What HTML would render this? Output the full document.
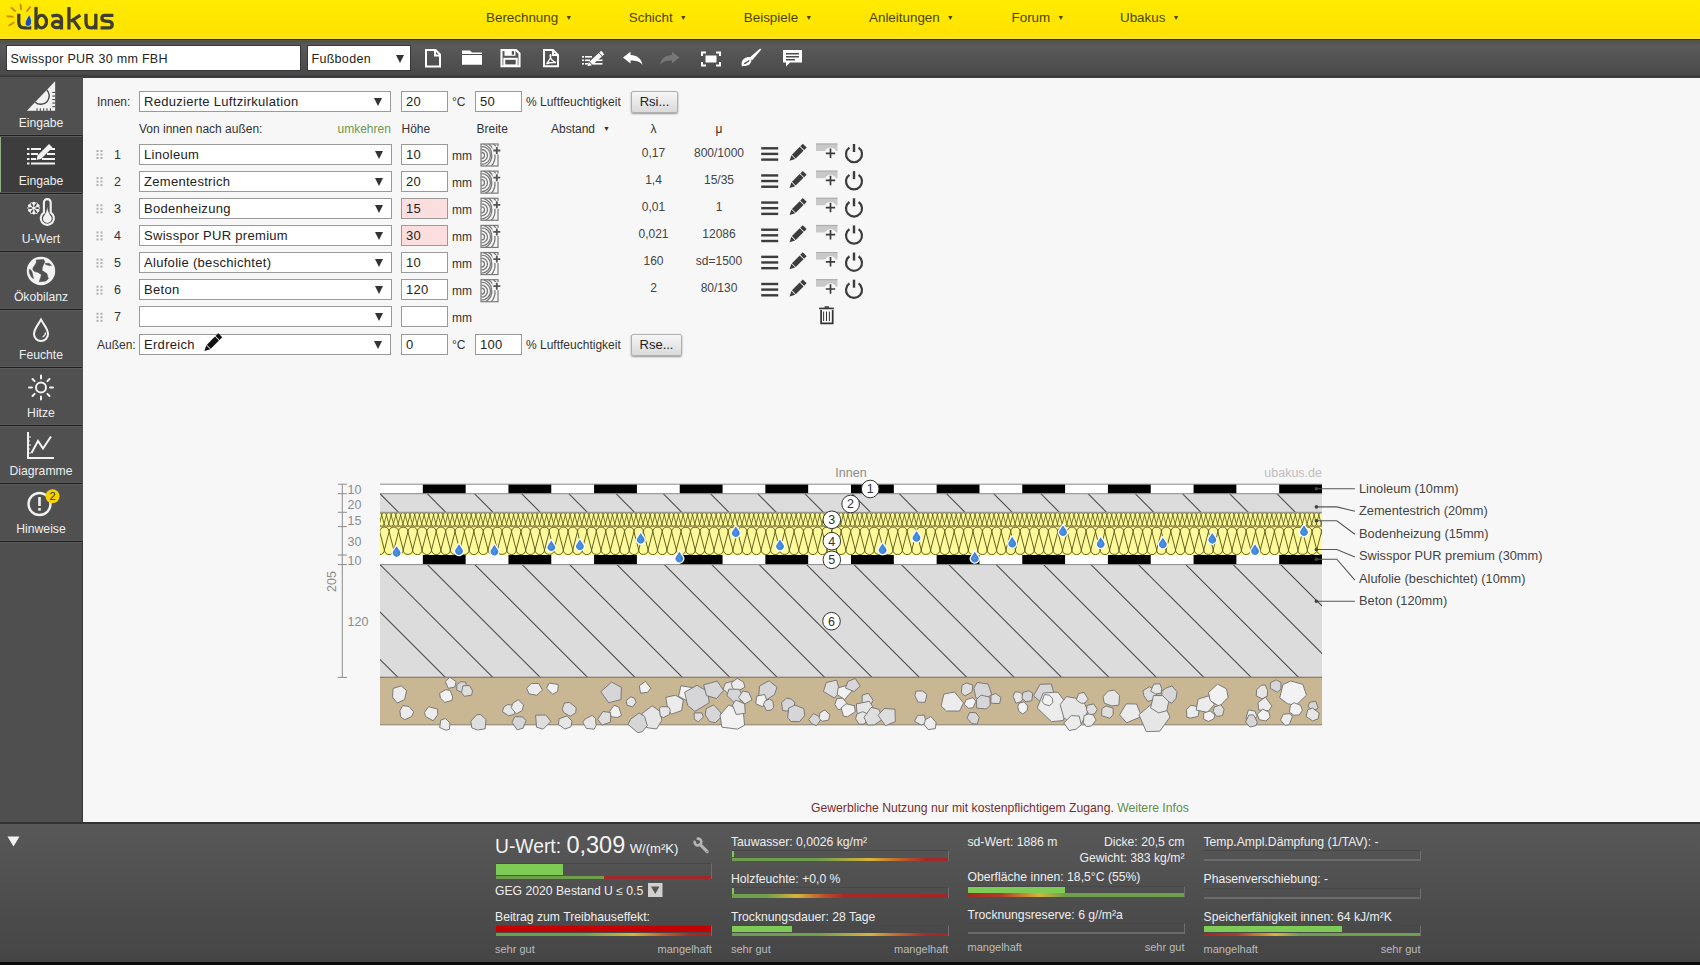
<!DOCTYPE html><html><head><meta charset="utf-8"><style>
*{box-sizing:border-box;margin:0;padding:0}
html,body{width:1700px;height:965px;overflow:hidden;background:#f7f7f7;font-family:"Liberation Sans",sans-serif;color:#333}
.a{position:absolute}
#hdr{left:0;top:0;width:1700px;height:40px;background:linear-gradient(#ffeb00 0%,#ffe300 90%,#f3e040 100%);border-bottom:1px solid #3a3300}
.nav{top:10px;font-size:13.4px;color:#4a4510;white-space:nowrap;line-height:15px}
.nav i{font-style:normal;font-size:7px;display:inline-block;margin-left:7px;vertical-align:2px}
#tb{left:0;top:40px;width:1700px;height:38px;background:linear-gradient(#55553f 0px,#525252 2px,#5a5a5a 5px,#4a4a4a 34px,#3c3c3c 36px,#3c3c3c 100%)}
#side{left:0;top:78px;width:83px;height:744px;background:#4f4f4f;border-right:1px solid #383838}
.tab{left:0;width:83px;height:58px;color:#eee;font-size:12.2px;text-align:center}
.tab .sep{position:absolute;z-index:2;left:0;bottom:-1px;width:82px;height:1.4px;background:#1e1e1e;box-shadow:0 -1px 0 #5a5a5a,0 1px 0 #5c5c5c}
.tab span{position:absolute;left:0;width:82px;top:36px;line-height:15px}
.tab svg{position:absolute;left:0;top:0}
#bot{left:0;top:822px;width:1700px;height:143px;background:linear-gradient(#585858,#454545);border-top:2px solid #333;border-bottom:3px solid #0a0a0a}
.lbl{font-size:12px;color:#333;white-space:nowrap;line-height:14px}
.sel{background:#fff;border:1px solid #9a9a9a;height:21px;font-size:13px;letter-spacing:.3px;color:#222;white-space:nowrap;overflow:hidden;padding-left:4px;line-height:19px}
.sel b{position:absolute;right:8px;top:6px;width:0;height:0;border-left:4.1px solid transparent;border-right:4.1px solid transparent;border-top:8px solid #333}
.inp{background:#fff;border:1px solid #9a9a9a;height:21px;width:47px;font-size:13px;letter-spacing:.3px;color:#222;padding-left:4px;line-height:19px}
.pink{background:#fcdede}
.btn{border:1px solid #b0b0b0;border-radius:2px;background:linear-gradient(#f6f6f6,#dadada);box-shadow:0 1px 2px rgba(0,0,0,.4);font-size:13px;color:#222;text-align:center;line-height:20px}
.num{font-size:12.5px;color:#333;line-height:14px}
.val{font-size:12px;color:#444;text-align:center;width:80px;line-height:14px}
.bt{font-size:12.2px;color:#eee;white-space:nowrap;line-height:14px}
.sm{font-size:11px;color:#bbb;white-space:nowrap;line-height:13px}
.bar{height:11px;border-right:1px solid #6e6e6e;border-top:1px solid #474747}
.bar .bl{position:absolute;left:0;bottom:0;width:100%;height:3px;background:#686868}
.bar .f{position:absolute;left:0;top:0;height:6px;background:#7ecb55}
.bar .s{position:absolute;left:0;top:6.5px;height:3.5px;width:100%}
.dl{font-size:12.8px;color:#444;white-space:nowrap;line-height:15px}
</style></head><body>
<div id="hdr" class="a"></div>
<svg class="a" style="left:0;top:0" width="130" height="38" viewBox="0 0 130 38">
<g stroke="#cf8a0c" stroke-width="1.9" stroke-linecap="round">
<line x1="7.4" y1="16.2" x2="12.6" y2="16.8"/>
<line x1="9.4" y1="25.2" x2="13.9" y2="22.5"/>
<line x1="11.5" y1="7.8" x2="15" y2="11"/>
<line x1="20.5" y1="4.4" x2="21.1" y2="9.1"/>
<line x1="30.2" y1="7.1" x2="26.9" y2="11"/>
</g>
<g fill="none" stroke="#403e2c" stroke-width="3.3">
<path d="M18.75 13.8 V22 C18.75 26 21 27.85 24.5 27.85 H31.3"/>
<path d="M36 6.9 V29.6"/>
<ellipse cx="41.6" cy="21.65" rx="4.9" ry="6.2"/>
<ellipse cx="56.9" cy="24.5" rx="4.5" ry="3.2"/>
<path d="M61.45 19 V29.5 M51.5 16.2 C53.5 15.4 55.5 15.35 57.2 15.4 C60.2 15.6 61.45 16.9 61.45 19.5"/>
<path d="M68.95 7.1 V29.6 M80.3 15.2 L70.8 21.4 M73.2 19.9 L79.9 29.5"/>
<path d="M86 13.7 V22 C86 26 88 27.95 90.9 27.95 C93.5 27.95 95.85 26.5 95.85 23 V13.7 M95.85 20 V29.6"/>
<path d="M113.4 15.4 H105 C102.6 15.4 101.9 16.8 101.9 18.2 C101.9 20 103.3 20.9 105.5 21.1 L108.8 21.4 C111.4 21.7 112.2 22.9 112.2 24.8 C112.2 26.8 111 27.95 108.8 27.95 H100.5"/>
</g>
<path d="M29.3 14.6 C27.5 17.5 25.2 20.5 25.2 23.2 C25.2 25.3 26.5 26.4 28 26.4 C30 26.4 31.6 24.5 31.6 22 C31.6 19.5 30.5 17 29.3 14.6 Z" fill="#1c4fae" stroke="#e8f0c0" stroke-width="0.7"/>
</svg>
<div class="a nav" style="left:486px">Berechnung<i>▼</i></div>
<div class="a nav" style="left:628.8px">Schicht<i>▼</i></div>
<div class="a nav" style="left:743.8px">Beispiele<i>▼</i></div>
<div class="a nav" style="left:869px">Anleitungen<i>▼</i></div>
<div class="a nav" style="left:1011.5px">Forum<i>▼</i></div>
<div class="a nav" style="left:1120px">Ubakus<i>▼</i></div>
<div id="tb" class="a"></div>
<div class="a sel" style="left:5.5px;top:44.8px;width:295px;height:26.2px;line-height:27px;font-size:12.5px;padding-left:4px;border:1px solid #38383c;border-top-width:1.6px">Swisspor PUR 30 mm FBH</div>
<div class="a sel" style="left:306.5px;top:44.8px;width:104px;height:26.2px;line-height:27px;font-size:12.5px;padding-left:4px;border:1px solid #38383c;border-top-width:1.6px">Fußboden<b style="top:9px;right:6px"></b></div>
<svg class="a" style="left:0;top:39px" width="820" height="39" viewBox="0 39 820 39">
<g fill="none" stroke="#fff" stroke-width="2">
<path d="M426 50 H435.5 L440 54.5 V66.5 H426 Z"/>
<path d="M435 50 V55.5 H440"/>
</g>
<path d="M462 50.5 H470 L472 52.5 H482 V64.8 H462 Z" fill="#fff"/>
<path d="M462 54.5 H482" stroke="#4d4d4d" stroke-width="1"/>
<path d="M501.5 50 H516 L519.5 53.5 V66.3 H501.5 Z" fill="none" stroke="#fff" stroke-width="2.1"/>
<rect x="504.5" y="50" width="11" height="5.8" fill="#fff"/><rect x="511.8" y="51.2" width="2.2" height="3.4" fill="#4d4d4d"/>
<rect x="504.3" y="58.8" width="12.4" height="6.6" fill="none" stroke="#fff" stroke-width="2"/>
<g fill="none" stroke="#fff" stroke-width="1.9">
<path d="M544 50 H553 L558 55 V66.3 H544 Z"/><path d="M553 50 V55 H558"/>
</g>
<path d="M546.5 63.8 C549 61 550.8 57.8 550.8 55.6 C550.8 54.2 549.8 54.5 550.2 56.6 C550.8 59.2 553 61.5 556 62.6 C553.6 62.4 549.2 62.6 546.5 63.8Z" fill="none" stroke="#fff" stroke-width="1.3"/>
<g fill="#fff">
<rect x="582" y="56" width="2" height="1.6"/><rect x="585" y="56" width="7" height="1.6"/>
<rect x="582" y="59.5" width="2" height="1.6"/><rect x="585" y="59.5" width="5" height="1.6"/>
<rect x="582" y="63" width="2" height="1.6"/><rect x="585" y="63" width="3" height="1.6"/>
<rect x="597" y="59.5" width="5.5" height="1.6"/><rect x="593" y="63" width="9.5" height="1.6"/>
</g>
<g transform="translate(587.5,66.3) rotate(-42)" fill="#fff"><path d="M0 0 L4 -2.3 V2.3 Z"/><rect x="4.8" y="-2.3" width="12.5" height="4.6"/><rect x="18" y="-2.3" width="2.5" height="4.6"/></g>
<path d="M623 57.5 L630.5 51.8 V55 C637 55.2 641.5 58.5 642.5 65 C640 61.5 636.5 60.5 630.5 60.5 V63.5 Z" fill="#fff"/>
<path d="M679.5 57.5 L672 51.8 V55 C665.5 55.2 661 58.5 660 65 C662.5 61.5 666 60.5 672 60.5 V63.5 Z" fill="#767676"/>
<g fill="none" stroke="#fff" stroke-width="2">
<path d="M702 56 V52.5 H706 M716 52.5 H720 V56 M720 62 V65.5 H716 M706 65.5 H702 V62"/>
</g>
<rect x="705.5" y="55.5" width="11" height="7" fill="#fff"/>
<path d="M760.2 48.6 L761.3 49.6 L752.2 60.2 L749.4 57.8 Z" fill="#fff"/>
<path d="M749.6 57 C745.8 56.6 742.6 59.3 741.8 62 C741.3 64 741.5 65.9 742.4 66.6 C743.6 65.3 744.8 66.3 747.2 65.6 C750.2 64.6 751.8 61.8 751.4 59.4 Z" fill="#fff"/>
<path d="M744.2 63.8 C745.7 62.6 747.6 62.2 749.3 60.4" stroke="#4d4d4d" stroke-width="1.2" fill="none"/>
<path d="M783 50 H802 V62.5 H790 L786 66.5 V62.5 H783 Z" fill="#fff"/>
<g fill="#4d4d4d"><rect x="786" y="53" width="13" height="1.5"/><rect x="786" y="56" width="13" height="1.5"/><rect x="786" y="59" width="9" height="1.5"/></g>
</svg>
<div id="side" class="a"></div>
<div class="a tab" style="top:77px;background:#505050"><div class="sep"></div><span style="top:38.6px">Eingabe</span></div>
<div class="a tab" style="top:135px;background:#3d3d3d"><div class="sep"></div><span style="top:38.6px">Eingabe</span></div>
<div class="a tab" style="top:193px;background:#505050"><div class="sep"></div><span style="top:38.6px">U-Wert</span></div>
<div class="a tab" style="top:251px;background:#505050"><div class="sep"></div><span style="top:38.6px">Ökobilanz</span></div>
<div class="a tab" style="top:309px;background:#505050"><div class="sep"></div><span style="top:38.6px">Feuchte</span></div>
<div class="a tab" style="top:367px;background:#505050"><div class="sep"></div><span style="top:38.6px">Hitze</span></div>
<div class="a tab" style="top:425px;background:#505050"><div class="sep"></div><span style="top:38.6px">Diagramme</span></div>
<div class="a tab" style="top:483px;background:#505050"><div class="sep"></div><span style="top:38.6px">Hinweise</span></div>
<div class="a" style="left:0;top:136px;width:1.3px;height:57px;background:#94ac84"></div>
<svg class="a" style="left:0;top:77px" width="83" height="470" viewBox="0 77 83 470">
<path d="M26.9 110.8 L55.1 81.2 V110.8 Z" fill="#f2f2f2"/>
<path d="M35.2 102.25 A8.5 8.5 0 0 0 46.9 89.95" fill="none" stroke="#494949" stroke-width="1.4"/>
<g fill="#494949"><rect x="52.3" y="91.9" width="2.8" height="1.1"/><rect x="52.3" y="95.5" width="2.8" height="1.1"/><rect x="52.3" y="99" width="2.8" height="1.1"/><rect x="52.3" y="102.5" width="2.8" height="1.1"/><rect x="52.3" y="106.1" width="2.8" height="1.1"/>
<rect x="36.5" y="108.3" width="1.1" height="2.5"/><rect x="39.8" y="108.3" width="1.1" height="2.5"/><rect x="43.1" y="108.3" width="1.1" height="2.5"/><rect x="46.4" y="108.3" width="1.1" height="2.5"/><rect x="49.9" y="108.3" width="1.1" height="2.5"/></g>
<g fill="#f2f2f2">
<rect x="27" y="148" width="2.5" height="2"/><rect x="31" y="148" width="10" height="2"/><rect x="46" y="148" width="9" height="2"/>
<rect x="27" y="153" width="2.5" height="2"/><rect x="31" y="153" width="7" height="2"/><rect x="47" y="153" width="8" height="2"/>
<rect x="27" y="158" width="2.5" height="2"/><rect x="31" y="158" width="5" height="2"/><rect x="42" y="158" width="13" height="2"/>
<rect x="27" y="162.5" width="2.5" height="2"/><rect x="31" y="162.5" width="24" height="2"/>
<path d="M37.5 155.5 L49 144 L52.5 147.5 L41 159 L36.5 160 Z"/>
</g>
<circle cx="33.8" cy="208.1" r="6.4" fill="#f2f2f2"/><ellipse cx="0" cy="0" rx="2.3" ry="0.85" fill="#494949" transform="translate(33.8,208.1) rotate(0) translate(3.6,0)"/><ellipse cx="0" cy="0" rx="2.3" ry="0.85" fill="#494949" transform="translate(33.8,208.1) rotate(60) translate(3.6,0)"/><ellipse cx="0" cy="0" rx="2.3" ry="0.85" fill="#494949" transform="translate(33.8,208.1) rotate(120) translate(3.6,0)"/><ellipse cx="0" cy="0" rx="2.3" ry="0.85" fill="#494949" transform="translate(33.8,208.1) rotate(180) translate(3.6,0)"/><ellipse cx="0" cy="0" rx="2.3" ry="0.85" fill="#494949" transform="translate(33.8,208.1) rotate(240) translate(3.6,0)"/><ellipse cx="0" cy="0" rx="2.3" ry="0.85" fill="#494949" transform="translate(33.8,208.1) rotate(300) translate(3.6,0)"/><rect x="-0.7" y="-0.7" width="1.4" height="1.4" fill="#494949" transform="translate(33.8,208.1) rotate(15) translate(6.6,0) rotate(45)"/><rect x="-0.7" y="-0.7" width="1.4" height="1.4" fill="#494949" transform="translate(33.8,208.1) rotate(45) translate(6.6,0) rotate(45)"/><rect x="-0.7" y="-0.7" width="1.4" height="1.4" fill="#494949" transform="translate(33.8,208.1) rotate(75) translate(6.6,0) rotate(45)"/><rect x="-0.7" y="-0.7" width="1.4" height="1.4" fill="#494949" transform="translate(33.8,208.1) rotate(105) translate(6.6,0) rotate(45)"/><rect x="-0.7" y="-0.7" width="1.4" height="1.4" fill="#494949" transform="translate(33.8,208.1) rotate(135) translate(6.6,0) rotate(45)"/><rect x="-0.7" y="-0.7" width="1.4" height="1.4" fill="#494949" transform="translate(33.8,208.1) rotate(165) translate(6.6,0) rotate(45)"/><rect x="-0.7" y="-0.7" width="1.4" height="1.4" fill="#494949" transform="translate(33.8,208.1) rotate(195) translate(6.6,0) rotate(45)"/><rect x="-0.7" y="-0.7" width="1.4" height="1.4" fill="#494949" transform="translate(33.8,208.1) rotate(225) translate(6.6,0) rotate(45)"/><rect x="-0.7" y="-0.7" width="1.4" height="1.4" fill="#494949" transform="translate(33.8,208.1) rotate(255) translate(6.6,0) rotate(45)"/><rect x="-0.7" y="-0.7" width="1.4" height="1.4" fill="#494949" transform="translate(33.8,208.1) rotate(285) translate(6.6,0) rotate(45)"/><rect x="-0.7" y="-0.7" width="1.4" height="1.4" fill="#494949" transform="translate(33.8,208.1) rotate(315) translate(6.6,0) rotate(45)"/><rect x="-0.7" y="-0.7" width="1.4" height="1.4" fill="#494949" transform="translate(33.8,208.1) rotate(345) translate(6.6,0) rotate(45)"/>
<path d="M43.9 212.6 V202.5 A3.4 3.4 0 0 1 50.7 202.5 V212.6 A6.6 6.6 0 1 1 43.9 212.6 Z" fill="none" stroke="#f2f2f2" stroke-width="2.1"/>
<path d="M47.3 206.5 C47.3 210 45.8 213.5 44.5 215.2 A4.4 4.4 0 1 0 50.1 215.2 C48.8 213.5 47.3 210 47.3 206.5Z" fill="#f2f2f2"/>
<circle cx="41" cy="271" r="14.2" fill="#f2f2f2"/>
<path d="M36.2 260 L43.7 259.6 L44.8 262.1 L43.7 263.9 L42.3 267.4 L42 270.6 L44.4 272 L46.9 273.7 L48.3 278.7 L45.8 281.1 L39.2 281.8 L40.9 276.9 L41.3 274.4 L37.7 272.3 L34.6 271.6 L32.8 269.5 L33.2 267.4 L34.6 265.6 L36.3 262.8 Z M45.1 263.5 L48.7 263.2 L51.5 265.3 L49.4 265.6 L45.8 264.6 Z M29.3 269.2 L31 270.2 L32.1 272.3 L33.5 278.7 L31 276.6 L29.3 272.3 Z" fill="#505050" stroke="#505050" stroke-width="0.6" stroke-linejoin="round"/>
<path d="M41 319.5 C38 325 34 329 34 334 C34 338 37.2 341 41 341 C44.8 341 48 338 48 334 C48 329 44 325 41 319.5 Z" fill="none" stroke="#f2f2f2" stroke-width="2"/>
<path d="M42.5 337 C44.5 336 45.5 334.5 45.5 332.5" fill="none" stroke="#f2f2f2" stroke-width="1.2"/>
<circle cx="41" cy="387.5" r="5" fill="none" stroke="#f2f2f2" stroke-width="2"/>
<g stroke="#f2f2f2" stroke-width="2" stroke-linecap="round">
<path d="M41 375.5 V378.5 M41 396.5 V399.5 M29 387.5 H32 M50 387.5 H53 M32.5 379 L34.6 381.1 M47.4 393.9 L49.5 396 M49.5 379 L47.4 381.1 M34.6 393.9 L32.5 396"/>
</g>
<path d="M28 432 V458 H54" fill="none" stroke="#f2f2f2" stroke-width="2"/>
<g stroke="#f2f2f2" stroke-width="1.2"><path d="M28 437 H31 M28 441 H30 M28 445 H31 M28 449 H30 M28 453 H31"/></g>
<path d="M31.5 453 L38 441 L43 448.5 L51 436.5" fill="none" stroke="#f2f2f2" stroke-width="2"/>
<circle cx="39.5" cy="504" r="11" fill="none" stroke="#f2f2f2" stroke-width="2.4"/>
<rect x="38.2" y="497" width="2.6" height="9" fill="#f2f2f2"/><rect x="38.2" y="508" width="2.6" height="2.6" fill="#f2f2f2"/>
<circle cx="52.5" cy="496.2" r="7" fill="#f5d300"/>
<text x="52.5" y="500.2" font-family="Liberation Sans" font-size="11" fill="#333" text-anchor="middle">2</text>
</svg>
<div class="a lbl" style="left:97px;top:95px">Innen:</div>
<div class="a sel" style="left:139px;top:90.5px;height:21.5px;width:252px">Reduzierte Luftzirkulation<b></b></div>
<div class="a inp" style="left:401px;top:90.5px;height:21.5px">20</div>
<div class="a lbl" style="left:452px;top:95px">°C</div>
<div class="a inp" style="left:475px;top:90.5px;height:21.5px">50</div>
<div class="a lbl" style="left:526px;top:95px">% Luftfeuchtigkeit</div>
<div class="a btn" style="left:631px;top:91px;width:47px;height:22px">Rsi...</div>
<div class="a lbl" style="left:139px;top:121.5px">Von innen nach außen:</div>
<div class="a lbl" style="left:337.5px;top:121.5px;color:#6f9a4f">umkehren</div>
<div class="a lbl" style="left:401.5px;top:121.5px">Höhe</div>
<div class="a lbl" style="left:476.5px;top:121.5px">Breite</div>
<div class="a lbl" style="left:551px;top:121.5px">Abstand<span style="font-size:7px;margin-left:8px;vertical-align:2px">▼</span></div>
<div class="a val" style="left:613.5px;top:121.5px;color:#333">λ</div>
<div class="a val" style="left:679px;top:121.5px;color:#333">μ</div>







<div class="a num" style="left:114px;top:147.5px">1</div>
<div class="a sel" style="left:139px;top:143.5px;width:253px">Linoleum<b></b></div>
<div class="a inp" style="left:401px;top:143.5px">10</div>
<div class="a lbl" style="left:452px;top:148.5px">mm</div>
<div class="a val" style="left:613.5px;top:145.5px">0,17</div>
<div class="a val" style="left:679px;top:145.5px">800/1000</div>
<div class="a num" style="left:114px;top:174.6px">2</div>
<div class="a sel" style="left:139px;top:170.6px;width:253px">Zementestrich<b></b></div>
<div class="a inp" style="left:401px;top:170.6px">20</div>
<div class="a lbl" style="left:452px;top:175.6px">mm</div>
<div class="a val" style="left:613.5px;top:172.6px">1,4</div>
<div class="a val" style="left:679px;top:172.6px">15/35</div>
<div class="a num" style="left:114px;top:201.8px">3</div>
<div class="a sel" style="left:139px;top:197.8px;width:253px">Bodenheizung<b></b></div>
<div class="a inp pink" style="left:401px;top:197.8px">15</div>
<div class="a lbl" style="left:452px;top:202.8px">mm</div>
<div class="a val" style="left:613.5px;top:199.8px">0,01</div>
<div class="a val" style="left:679px;top:199.8px">1</div>
<div class="a num" style="left:114px;top:228.9px">4</div>
<div class="a sel" style="left:139px;top:224.9px;width:253px">Swisspor PUR premium<b></b></div>
<div class="a inp pink" style="left:401px;top:224.9px">30</div>
<div class="a lbl" style="left:452px;top:229.9px">mm</div>
<div class="a val" style="left:613.5px;top:226.9px">0,021</div>
<div class="a val" style="left:679px;top:226.9px">12086</div>
<div class="a num" style="left:114px;top:256.1px">5</div>
<div class="a sel" style="left:139px;top:252.1px;width:253px">Alufolie (beschichtet)<b></b></div>
<div class="a inp" style="left:401px;top:252.1px">10</div>
<div class="a lbl" style="left:452px;top:257.1px">mm</div>
<div class="a val" style="left:613.5px;top:254.1px">160</div>
<div class="a val" style="left:679px;top:254.1px">sd=1500</div>
<div class="a num" style="left:114px;top:283.2px">6</div>
<div class="a sel" style="left:139px;top:279.2px;width:253px">Beton<b></b></div>
<div class="a inp" style="left:401px;top:279.2px">120</div>
<div class="a lbl" style="left:452px;top:284.2px">mm</div>
<div class="a val" style="left:613.5px;top:281.2px">2</div>
<div class="a val" style="left:679px;top:281.2px">80/130</div>
<div class="a num" style="left:114px;top:310.3px">7</div>
<div class="a sel" style="left:139px;top:306.3px;width:253px"><b></b></div>
<div class="a inp" style="left:401px;top:306.3px"></div>
<div class="a lbl" style="left:452px;top:311.3px">mm</div>
<svg class="a" style="left:0;top:0" width="880" height="370" viewBox="0 0 880 370"><rect x="96.5" y="150.0" width="2" height="2" fill="#b0b0b0"/><rect x="100.5" y="150.0" width="2" height="2" fill="#b0b0b0"/><rect x="96.5" y="153.5" width="2" height="2" fill="#b0b0b0"/><rect x="100.5" y="153.5" width="2" height="2" fill="#b0b0b0"/><rect x="96.5" y="157.0" width="2" height="2" fill="#b0b0b0"/><rect x="100.5" y="157.0" width="2" height="2" fill="#b0b0b0"/><rect x="96.5" y="177.1" width="2" height="2" fill="#b0b0b0"/><rect x="100.5" y="177.1" width="2" height="2" fill="#b0b0b0"/><rect x="96.5" y="180.6" width="2" height="2" fill="#b0b0b0"/><rect x="100.5" y="180.6" width="2" height="2" fill="#b0b0b0"/><rect x="96.5" y="184.1" width="2" height="2" fill="#b0b0b0"/><rect x="100.5" y="184.1" width="2" height="2" fill="#b0b0b0"/><rect x="96.5" y="204.3" width="2" height="2" fill="#b0b0b0"/><rect x="100.5" y="204.3" width="2" height="2" fill="#b0b0b0"/><rect x="96.5" y="207.8" width="2" height="2" fill="#b0b0b0"/><rect x="100.5" y="207.8" width="2" height="2" fill="#b0b0b0"/><rect x="96.5" y="211.3" width="2" height="2" fill="#b0b0b0"/><rect x="100.5" y="211.3" width="2" height="2" fill="#b0b0b0"/><rect x="96.5" y="231.4" width="2" height="2" fill="#b0b0b0"/><rect x="100.5" y="231.4" width="2" height="2" fill="#b0b0b0"/><rect x="96.5" y="234.9" width="2" height="2" fill="#b0b0b0"/><rect x="100.5" y="234.9" width="2" height="2" fill="#b0b0b0"/><rect x="96.5" y="238.4" width="2" height="2" fill="#b0b0b0"/><rect x="100.5" y="238.4" width="2" height="2" fill="#b0b0b0"/><rect x="96.5" y="258.6" width="2" height="2" fill="#b0b0b0"/><rect x="100.5" y="258.6" width="2" height="2" fill="#b0b0b0"/><rect x="96.5" y="262.1" width="2" height="2" fill="#b0b0b0"/><rect x="100.5" y="262.1" width="2" height="2" fill="#b0b0b0"/><rect x="96.5" y="265.6" width="2" height="2" fill="#b0b0b0"/><rect x="100.5" y="265.6" width="2" height="2" fill="#b0b0b0"/><rect x="96.5" y="285.7" width="2" height="2" fill="#b0b0b0"/><rect x="100.5" y="285.7" width="2" height="2" fill="#b0b0b0"/><rect x="96.5" y="289.2" width="2" height="2" fill="#b0b0b0"/><rect x="100.5" y="289.2" width="2" height="2" fill="#b0b0b0"/><rect x="96.5" y="292.7" width="2" height="2" fill="#b0b0b0"/><rect x="100.5" y="292.7" width="2" height="2" fill="#b0b0b0"/><rect x="96.5" y="312.8" width="2" height="2" fill="#b0b0b0"/><rect x="100.5" y="312.8" width="2" height="2" fill="#b0b0b0"/><rect x="96.5" y="316.3" width="2" height="2" fill="#b0b0b0"/><rect x="100.5" y="316.3" width="2" height="2" fill="#b0b0b0"/><rect x="96.5" y="319.8" width="2" height="2" fill="#b0b0b0"/><rect x="100.5" y="319.8" width="2" height="2" fill="#b0b0b0"/><g transform="translate(480.5,143.50)"><rect x="0.5" y="0.5" width="17" height="22" fill="none" stroke="#7a7a7a" stroke-width="1.2"/><g fill="none" stroke="#7a7a7a" stroke-width="1.3"><path d="M1 9 A3 3 0 0 1 1 15"/><path d="M1 6 A6 6 0 0 1 1 18"/><path d="M1 3 A9 9 0 0 1 1 21"/><path d="M3 0.5 A12 12 0 0 1 5 22.5"/><path d="M8 0.5 A15 15 0 0 1 11 22.5"/><path d="M13 0.5 L15.5 3"/></g><rect x="12" y="3" width="7" height="8" fill="#f7f7f7"/><path d="M16.3 3.5 V10.5 M12.8 7 H19.8" stroke="#555" stroke-width="1.8"/></g><g fill="#3c3c3c"><rect x="761.2" y="147.10" width="17" height="2.4"/><rect x="761.2" y="152.70" width="17" height="2.4"/><rect x="761.2" y="158.40" width="17" height="2.4"/></g><g transform="translate(789.6,160.80) rotate(-45)" fill="#3c3c3c"><path d="M0 0 L5.2 -2.7 V2.7 Z"/><rect x="6" y="-2.7" width="11" height="5.4"/><rect x="17.8" y="-2.7" width="3.6" height="5.4"/></g><g transform="translate(816,143.50)"><rect x="0" y="0" width="21.5" height="7.5" fill="#c8c8c8"/><rect x="0" y="0" width="21.5" height="1" fill="#aaa"/><circle cx="14.5" cy="10" r="6" fill="#f7f7f7"/><path d="M14.5 5 V14.5 M9.8 9.8 H19.2" stroke="#3c3c3c" stroke-width="1.7"/></g><g transform="translate(854,153.50)"><path d="M-4.6 -5.8 A8 8 0 1 0 4.6 -5.8" fill="none" stroke="#3c3c3c" stroke-width="2.2"/><rect x="-1.2" y="-9.5" width="2.4" height="8" fill="#3c3c3c"/></g><g transform="translate(480.5,170.64)"><rect x="0.5" y="0.5" width="17" height="22" fill="none" stroke="#7a7a7a" stroke-width="1.2"/><g fill="none" stroke="#7a7a7a" stroke-width="1.3"><path d="M1 9 A3 3 0 0 1 1 15"/><path d="M1 6 A6 6 0 0 1 1 18"/><path d="M1 3 A9 9 0 0 1 1 21"/><path d="M3 0.5 A12 12 0 0 1 5 22.5"/><path d="M8 0.5 A15 15 0 0 1 11 22.5"/><path d="M13 0.5 L15.5 3"/></g><rect x="12" y="3" width="7" height="8" fill="#f7f7f7"/><path d="M16.3 3.5 V10.5 M12.8 7 H19.8" stroke="#555" stroke-width="1.8"/></g><g fill="#3c3c3c"><rect x="761.2" y="174.24" width="17" height="2.4"/><rect x="761.2" y="179.84" width="17" height="2.4"/><rect x="761.2" y="185.54" width="17" height="2.4"/></g><g transform="translate(789.6,187.94) rotate(-45)" fill="#3c3c3c"><path d="M0 0 L5.2 -2.7 V2.7 Z"/><rect x="6" y="-2.7" width="11" height="5.4"/><rect x="17.8" y="-2.7" width="3.6" height="5.4"/></g><g transform="translate(816,170.64)"><rect x="0" y="0" width="21.5" height="7.5" fill="#c8c8c8"/><rect x="0" y="0" width="21.5" height="1" fill="#aaa"/><circle cx="14.5" cy="10" r="6" fill="#f7f7f7"/><path d="M14.5 5 V14.5 M9.8 9.8 H19.2" stroke="#3c3c3c" stroke-width="1.7"/></g><g transform="translate(854,180.64)"><path d="M-4.6 -5.8 A8 8 0 1 0 4.6 -5.8" fill="none" stroke="#3c3c3c" stroke-width="2.2"/><rect x="-1.2" y="-9.5" width="2.4" height="8" fill="#3c3c3c"/></g><g transform="translate(480.5,197.78)"><rect x="0.5" y="0.5" width="17" height="22" fill="none" stroke="#7a7a7a" stroke-width="1.2"/><g fill="none" stroke="#7a7a7a" stroke-width="1.3"><path d="M1 9 A3 3 0 0 1 1 15"/><path d="M1 6 A6 6 0 0 1 1 18"/><path d="M1 3 A9 9 0 0 1 1 21"/><path d="M3 0.5 A12 12 0 0 1 5 22.5"/><path d="M8 0.5 A15 15 0 0 1 11 22.5"/><path d="M13 0.5 L15.5 3"/></g><rect x="12" y="3" width="7" height="8" fill="#f7f7f7"/><path d="M16.3 3.5 V10.5 M12.8 7 H19.8" stroke="#555" stroke-width="1.8"/></g><g fill="#3c3c3c"><rect x="761.2" y="201.38" width="17" height="2.4"/><rect x="761.2" y="206.98" width="17" height="2.4"/><rect x="761.2" y="212.68" width="17" height="2.4"/></g><g transform="translate(789.6,215.08) rotate(-45)" fill="#3c3c3c"><path d="M0 0 L5.2 -2.7 V2.7 Z"/><rect x="6" y="-2.7" width="11" height="5.4"/><rect x="17.8" y="-2.7" width="3.6" height="5.4"/></g><g transform="translate(816,197.78)"><rect x="0" y="0" width="21.5" height="7.5" fill="#c8c8c8"/><rect x="0" y="0" width="21.5" height="1" fill="#aaa"/><circle cx="14.5" cy="10" r="6" fill="#f7f7f7"/><path d="M14.5 5 V14.5 M9.8 9.8 H19.2" stroke="#3c3c3c" stroke-width="1.7"/></g><g transform="translate(854,207.78)"><path d="M-4.6 -5.8 A8 8 0 1 0 4.6 -5.8" fill="none" stroke="#3c3c3c" stroke-width="2.2"/><rect x="-1.2" y="-9.5" width="2.4" height="8" fill="#3c3c3c"/></g><g transform="translate(480.5,224.92)"><rect x="0.5" y="0.5" width="17" height="22" fill="none" stroke="#7a7a7a" stroke-width="1.2"/><g fill="none" stroke="#7a7a7a" stroke-width="1.3"><path d="M1 9 A3 3 0 0 1 1 15"/><path d="M1 6 A6 6 0 0 1 1 18"/><path d="M1 3 A9 9 0 0 1 1 21"/><path d="M3 0.5 A12 12 0 0 1 5 22.5"/><path d="M8 0.5 A15 15 0 0 1 11 22.5"/><path d="M13 0.5 L15.5 3"/></g><rect x="12" y="3" width="7" height="8" fill="#f7f7f7"/><path d="M16.3 3.5 V10.5 M12.8 7 H19.8" stroke="#555" stroke-width="1.8"/></g><g fill="#3c3c3c"><rect x="761.2" y="228.52" width="17" height="2.4"/><rect x="761.2" y="234.12" width="17" height="2.4"/><rect x="761.2" y="239.82" width="17" height="2.4"/></g><g transform="translate(789.6,242.22) rotate(-45)" fill="#3c3c3c"><path d="M0 0 L5.2 -2.7 V2.7 Z"/><rect x="6" y="-2.7" width="11" height="5.4"/><rect x="17.8" y="-2.7" width="3.6" height="5.4"/></g><g transform="translate(816,224.92)"><rect x="0" y="0" width="21.5" height="7.5" fill="#c8c8c8"/><rect x="0" y="0" width="21.5" height="1" fill="#aaa"/><circle cx="14.5" cy="10" r="6" fill="#f7f7f7"/><path d="M14.5 5 V14.5 M9.8 9.8 H19.2" stroke="#3c3c3c" stroke-width="1.7"/></g><g transform="translate(854,234.92)"><path d="M-4.6 -5.8 A8 8 0 1 0 4.6 -5.8" fill="none" stroke="#3c3c3c" stroke-width="2.2"/><rect x="-1.2" y="-9.5" width="2.4" height="8" fill="#3c3c3c"/></g><g transform="translate(480.5,252.06)"><rect x="0.5" y="0.5" width="17" height="22" fill="none" stroke="#7a7a7a" stroke-width="1.2"/><g fill="none" stroke="#7a7a7a" stroke-width="1.3"><path d="M1 9 A3 3 0 0 1 1 15"/><path d="M1 6 A6 6 0 0 1 1 18"/><path d="M1 3 A9 9 0 0 1 1 21"/><path d="M3 0.5 A12 12 0 0 1 5 22.5"/><path d="M8 0.5 A15 15 0 0 1 11 22.5"/><path d="M13 0.5 L15.5 3"/></g><rect x="12" y="3" width="7" height="8" fill="#f7f7f7"/><path d="M16.3 3.5 V10.5 M12.8 7 H19.8" stroke="#555" stroke-width="1.8"/></g><g fill="#3c3c3c"><rect x="761.2" y="255.66" width="17" height="2.4"/><rect x="761.2" y="261.26" width="17" height="2.4"/><rect x="761.2" y="266.96" width="17" height="2.4"/></g><g transform="translate(789.6,269.36) rotate(-45)" fill="#3c3c3c"><path d="M0 0 L5.2 -2.7 V2.7 Z"/><rect x="6" y="-2.7" width="11" height="5.4"/><rect x="17.8" y="-2.7" width="3.6" height="5.4"/></g><g transform="translate(816,252.06)"><rect x="0" y="0" width="21.5" height="7.5" fill="#c8c8c8"/><rect x="0" y="0" width="21.5" height="1" fill="#aaa"/><circle cx="14.5" cy="10" r="6" fill="#f7f7f7"/><path d="M14.5 5 V14.5 M9.8 9.8 H19.2" stroke="#3c3c3c" stroke-width="1.7"/></g><g transform="translate(854,262.06)"><path d="M-4.6 -5.8 A8 8 0 1 0 4.6 -5.8" fill="none" stroke="#3c3c3c" stroke-width="2.2"/><rect x="-1.2" y="-9.5" width="2.4" height="8" fill="#3c3c3c"/></g><g transform="translate(480.5,279.20)"><rect x="0.5" y="0.5" width="17" height="22" fill="none" stroke="#7a7a7a" stroke-width="1.2"/><g fill="none" stroke="#7a7a7a" stroke-width="1.3"><path d="M1 9 A3 3 0 0 1 1 15"/><path d="M1 6 A6 6 0 0 1 1 18"/><path d="M1 3 A9 9 0 0 1 1 21"/><path d="M3 0.5 A12 12 0 0 1 5 22.5"/><path d="M8 0.5 A15 15 0 0 1 11 22.5"/><path d="M13 0.5 L15.5 3"/></g><rect x="12" y="3" width="7" height="8" fill="#f7f7f7"/><path d="M16.3 3.5 V10.5 M12.8 7 H19.8" stroke="#555" stroke-width="1.8"/></g><g fill="#3c3c3c"><rect x="761.2" y="282.80" width="17" height="2.4"/><rect x="761.2" y="288.40" width="17" height="2.4"/><rect x="761.2" y="294.10" width="17" height="2.4"/></g><g transform="translate(789.6,296.50) rotate(-45)" fill="#3c3c3c"><path d="M0 0 L5.2 -2.7 V2.7 Z"/><rect x="6" y="-2.7" width="11" height="5.4"/><rect x="17.8" y="-2.7" width="3.6" height="5.4"/></g><g transform="translate(816,279.20)"><rect x="0" y="0" width="21.5" height="7.5" fill="#c8c8c8"/><rect x="0" y="0" width="21.5" height="1" fill="#aaa"/><circle cx="14.5" cy="10" r="6" fill="#f7f7f7"/><path d="M14.5 5 V14.5 M9.8 9.8 H19.2" stroke="#3c3c3c" stroke-width="1.7"/></g><g transform="translate(854,289.20)"><path d="M-4.6 -5.8 A8 8 0 1 0 4.6 -5.8" fill="none" stroke="#3c3c3c" stroke-width="2.2"/><rect x="-1.2" y="-9.5" width="2.4" height="8" fill="#3c3c3c"/></g><g fill="#333"><rect x="819.1" y="307.64" width="14.8" height="1.6"/><rect x="824.5" y="306.14" width="4.6" height="1.6" rx="0.6"/></g><g fill="none" stroke="#333"><path d="M821.1 309.94 V323.44 H832.7 V309.94" stroke-width="1.7"/><path d="M823.6 311.64 V321.04 M826.5 311.64 V321.04 M829.4 311.64 V321.04" stroke-width="1"/></g></svg>
<div class="a lbl" style="left:97px;top:338px">Außen:</div>
<div class="a sel" style="left:139px;top:333.5px;width:252px">Erdreich<b></b></div>
<svg class="a" style="left:200px;top:330px" width="26" height="26" viewBox="200 330 26 26"><g transform="translate(204.4,351.1) rotate(-45)" fill="#111"><path d="M0 0 L5.4 -2.8 V2.8 Z"/><rect x="6.2" y="-2.8" width="11.6" height="5.6"/><rect x="18.6" y="-2.8" width="3.8" height="5.6"/></g></svg>
<div class="a inp" style="left:401px;top:333.5px">0</div>
<div class="a lbl" style="left:452px;top:338px">°C</div>
<div class="a inp" style="left:475px;top:333.5px">100</div>
<div class="a lbl" style="left:526px;top:338px">% Luftfeuchtigkeit</div>
<div class="a btn" style="left:631px;top:333.5px;width:51px;height:22.5px">Rse...</div>
<svg class="a" style="left:0;top:0" width="1700" height="965" viewBox="0 0 1700 965"><defs><clipPath id="c0"><rect x="380.0" y="484.2" width="942.0" height="9.50"/></clipPath><clipPath id="c1"><rect x="380.0" y="493.7" width="942.0" height="18.60"/></clipPath><clipPath id="c2"><rect x="380.0" y="512.3" width="942.0" height="14.30"/></clipPath><clipPath id="c3"><rect x="380.0" y="526.6" width="942.0" height="28.40"/></clipPath><clipPath id="c4"><rect x="380.0" y="555.0" width="942.0" height="9.60"/></clipPath><clipPath id="c5"><rect x="380.0" y="564.6" width="942.0" height="112.80"/></clipPath><clipPath id="c6"><rect x="380.0" y="677.4" width="942.0" height="47.40"/></clipPath></defs><rect x="380.0" y="484.2" width="942.0" height="9.50" fill="#fff"/><rect x="422.82" y="484.2" width="42.82" height="9.50" fill="#000"/><rect x="508.45" y="484.2" width="42.82" height="9.50" fill="#000"/><rect x="594.09" y="484.2" width="42.82" height="9.50" fill="#000"/><rect x="679.73" y="484.2" width="42.82" height="9.50" fill="#000"/><rect x="765.36" y="484.2" width="42.82" height="9.50" fill="#000"/><rect x="851.00" y="484.2" width="42.82" height="9.50" fill="#000"/><rect x="936.64" y="484.2" width="42.82" height="9.50" fill="#000"/><rect x="1022.27" y="484.2" width="42.82" height="9.50" fill="#000"/><rect x="1107.91" y="484.2" width="42.82" height="9.50" fill="#000"/><rect x="1193.55" y="484.2" width="42.82" height="9.50" fill="#000"/><rect x="1279.18" y="484.2" width="42.82" height="9.50" fill="#000"/><rect x="380.0" y="555.0" width="942.0" height="9.60" fill="#fff"/><rect x="422.82" y="555.0" width="42.82" height="9.60" fill="#000"/><rect x="508.45" y="555.0" width="42.82" height="9.60" fill="#000"/><rect x="594.09" y="555.0" width="42.82" height="9.60" fill="#000"/><rect x="679.73" y="555.0" width="42.82" height="9.60" fill="#000"/><rect x="765.36" y="555.0" width="42.82" height="9.60" fill="#000"/><rect x="851.00" y="555.0" width="42.82" height="9.60" fill="#000"/><rect x="936.64" y="555.0" width="42.82" height="9.60" fill="#000"/><rect x="1022.27" y="555.0" width="42.82" height="9.60" fill="#000"/><rect x="1107.91" y="555.0" width="42.82" height="9.60" fill="#000"/><rect x="1193.55" y="555.0" width="42.82" height="9.60" fill="#000"/><rect x="1279.18" y="555.0" width="42.82" height="9.60" fill="#000"/><rect x="380.0" y="493.7" width="942.0" height="18.60" fill="#dcdcdc"/><g clip-path="url(#c1)" stroke="#4a4a4a" stroke-width="1.05"><line x1="285.60" y1="493.7" x2="304.20" y2="512.3"/><line x1="332.80" y1="493.7" x2="351.40" y2="512.3"/><line x1="380.00" y1="493.7" x2="398.60" y2="512.3"/><line x1="427.20" y1="493.7" x2="445.80" y2="512.3"/><line x1="474.40" y1="493.7" x2="493.00" y2="512.3"/><line x1="521.60" y1="493.7" x2="540.20" y2="512.3"/><line x1="568.80" y1="493.7" x2="587.40" y2="512.3"/><line x1="616.00" y1="493.7" x2="634.60" y2="512.3"/><line x1="663.20" y1="493.7" x2="681.80" y2="512.3"/><line x1="710.40" y1="493.7" x2="729.00" y2="512.3"/><line x1="757.60" y1="493.7" x2="776.20" y2="512.3"/><line x1="804.80" y1="493.7" x2="823.40" y2="512.3"/><line x1="852.00" y1="493.7" x2="870.60" y2="512.3"/><line x1="899.20" y1="493.7" x2="917.80" y2="512.3"/><line x1="946.40" y1="493.7" x2="965.00" y2="512.3"/><line x1="993.60" y1="493.7" x2="1012.20" y2="512.3"/><line x1="1040.80" y1="493.7" x2="1059.40" y2="512.3"/><line x1="1088.00" y1="493.7" x2="1106.60" y2="512.3"/><line x1="1135.20" y1="493.7" x2="1153.80" y2="512.3"/><line x1="1182.40" y1="493.7" x2="1201.00" y2="512.3"/><line x1="1229.60" y1="493.7" x2="1248.20" y2="512.3"/><line x1="1276.80" y1="493.7" x2="1295.40" y2="512.3"/></g><rect x="380.0" y="564.6" width="942.0" height="112.80" fill="#dcdcdc"/><g clip-path="url(#c5)" stroke="#4a4a4a" stroke-width="1.05"><line x1="190.40" y1="564.6" x2="303.20" y2="677.4"/><line x1="237.80" y1="564.6" x2="350.60" y2="677.4"/><line x1="285.20" y1="564.6" x2="398.00" y2="677.4"/><line x1="332.60" y1="564.6" x2="445.40" y2="677.4"/><line x1="380.00" y1="564.6" x2="492.80" y2="677.4"/><line x1="427.40" y1="564.6" x2="540.20" y2="677.4"/><line x1="474.80" y1="564.6" x2="587.60" y2="677.4"/><line x1="522.20" y1="564.6" x2="635.00" y2="677.4"/><line x1="569.60" y1="564.6" x2="682.40" y2="677.4"/><line x1="617.00" y1="564.6" x2="729.80" y2="677.4"/><line x1="664.40" y1="564.6" x2="777.20" y2="677.4"/><line x1="711.80" y1="564.6" x2="824.60" y2="677.4"/><line x1="759.20" y1="564.6" x2="872.00" y2="677.4"/><line x1="806.60" y1="564.6" x2="919.40" y2="677.4"/><line x1="854.00" y1="564.6" x2="966.80" y2="677.4"/><line x1="901.40" y1="564.6" x2="1014.20" y2="677.4"/><line x1="948.80" y1="564.6" x2="1061.60" y2="677.4"/><line x1="996.20" y1="564.6" x2="1109.00" y2="677.4"/><line x1="1043.60" y1="564.6" x2="1156.40" y2="677.4"/><line x1="1091.00" y1="564.6" x2="1203.80" y2="677.4"/><line x1="1138.40" y1="564.6" x2="1251.20" y2="677.4"/><line x1="1185.80" y1="564.6" x2="1298.60" y2="677.4"/><line x1="1233.20" y1="564.6" x2="1346.00" y2="677.4"/><line x1="1280.60" y1="564.6" x2="1393.40" y2="677.4"/></g><rect x="380.0" y="512.3" width="942.0" height="14.30" fill="#fdfa9c"/><g clip-path="url(#c2)" fill="none" stroke="#5e5a18" stroke-width="0.85"><polyline points="374.68,523.85 377.04,515.05 379.39,523.85 381.75,515.05 384.10,523.85 386.45,515.05 388.81,523.85 391.16,515.05 393.52,523.85 395.87,515.05 398.23,523.85 400.58,515.05 402.94,523.85 405.29,515.05 407.65,523.85 410.00,515.05 412.35,523.85 414.71,515.05 417.06,523.85 419.42,515.05 421.77,523.85 424.13,515.05 426.48,523.85 428.84,515.05 431.19,523.85 433.54,515.05 435.90,523.85 438.25,515.05 440.61,523.85 442.96,515.05 445.32,523.85 447.67,515.05 450.03,523.85 452.38,515.05 454.74,523.85 457.09,515.05 459.44,523.85 461.80,515.05 464.15,523.85 466.51,515.05 468.86,523.85 471.22,515.05 473.57,523.85 475.93,515.05 478.28,523.85 480.63,515.05 482.99,523.85 485.34,515.05 487.70,523.85 490.05,515.05 492.41,523.85 494.76,515.05 497.12,523.85 499.47,515.05 501.83,523.85 504.18,515.05 506.53,523.85 508.89,515.05 511.24,523.85 513.60,515.05 515.95,523.85 518.31,515.05 520.66,523.85 523.02,515.05 525.37,523.85 527.72,515.05 530.08,523.85 532.43,515.05 534.79,523.85 537.14,515.05 539.50,523.85 541.85,515.05 544.21,523.85 546.56,515.05 548.91,523.85 551.27,515.05 553.62,523.85 555.98,515.05 558.33,523.85 560.69,515.05 563.04,523.85 565.40,515.05 567.75,523.85 570.11,515.05 572.46,523.85 574.81,515.05 577.17,523.85 579.52,515.05 581.88,523.85 584.23,515.05 586.59,523.85 588.94,515.05 591.30,523.85 593.65,515.05 596.00,523.85 598.36,515.05 600.71,523.85 603.07,515.05 605.42,523.85 607.78,515.05 610.13,523.85 612.49,515.05 614.84,523.85 617.20,515.05 619.55,523.85 621.90,515.05 624.26,523.85 626.61,515.05 628.97,523.85 631.32,515.05 633.68,523.85 636.03,515.05 638.39,523.85 640.74,515.05 643.10,523.85 645.45,515.05 647.80,523.85 650.16,515.05 652.51,523.85 654.87,515.05 657.22,523.85 659.58,515.05 661.93,523.85 664.29,515.05 666.64,523.85 668.99,515.05 671.35,523.85 673.70,515.05 676.06,523.85 678.41,515.05 680.77,523.85 683.12,515.05 685.48,523.85 687.83,515.05 690.18,523.85 692.54,515.05 694.89,523.85 697.25,515.05 699.60,523.85 701.96,515.05 704.31,523.85 706.67,515.05 709.02,523.85 711.38,515.05 713.73,523.85 716.08,515.05 718.44,523.85 720.79,515.05 723.15,523.85 725.50,515.05 727.86,523.85 730.21,515.05 732.57,523.85 734.92,515.05 737.27,523.85 739.63,515.05 741.98,523.85 744.34,515.05 746.69,523.85 749.05,515.05 751.40,523.85 753.76,515.05 756.11,523.85 758.47,515.05 760.82,523.85 763.17,515.05 765.53,523.85 767.88,515.05 770.24,523.85 772.59,515.05 774.95,523.85 777.30,515.05 779.66,523.85 782.01,515.05 784.37,523.85 786.72,515.05 789.07,523.85 791.43,515.05 793.78,523.85 796.14,515.05 798.49,523.85 800.85,515.05 803.20,523.85 805.56,515.05 807.91,523.85 810.26,515.05 812.62,523.85 814.97,515.05 817.33,523.85 819.68,515.05 822.04,523.85 824.39,515.05 826.75,523.85 829.10,515.05 831.45,523.85 833.81,515.05 836.16,523.85 838.52,515.05 840.87,523.85 843.23,515.05 845.58,523.85 847.94,515.05 850.29,523.85 852.65,515.05 855.00,523.85 857.35,515.05 859.71,523.85 862.06,515.05 864.42,523.85 866.77,515.05 869.13,523.85 871.48,515.05 873.84,523.85 876.19,515.05 878.54,523.85 880.90,515.05 883.25,523.85 885.61,515.05 887.96,523.85 890.32,515.05 892.67,523.85 895.03,515.05 897.38,523.85 899.74,515.05 902.09,523.85 904.44,515.05 906.80,523.85 909.15,515.05 911.51,523.85 913.86,515.05 916.22,523.85 918.57,515.05 920.93,523.85 923.28,515.05 925.63,523.85 927.99,515.05 930.34,523.85 932.70,515.05 935.05,523.85 937.41,515.05 939.76,523.85 942.12,515.05 944.47,523.85 946.83,515.05 949.18,523.85 951.53,515.05 953.89,523.85 956.24,515.05 958.60,523.85 960.95,515.05 963.31,523.85 965.66,515.05 968.02,523.85 970.37,515.05 972.73,523.85 975.08,515.05 977.43,523.85 979.79,515.05 982.14,523.85 984.50,515.05 986.85,523.85 989.21,515.05 991.56,523.85 993.92,515.05 996.27,523.85 998.62,515.05 1000.98,523.85 1003.33,515.05 1005.69,523.85 1008.04,515.05 1010.40,523.85 1012.75,515.05 1015.11,523.85 1017.46,515.05 1019.81,523.85 1022.17,515.05 1024.52,523.85 1026.88,515.05 1029.23,523.85 1031.59,515.05 1033.94,523.85 1036.30,515.05 1038.65,523.85 1041.01,515.05 1043.36,523.85 1045.71,515.05 1048.07,523.85 1050.42,515.05 1052.78,523.85 1055.13,515.05 1057.49,523.85 1059.84,515.05 1062.20,523.85 1064.55,515.05 1066.90,523.85 1069.26,515.05 1071.61,523.85 1073.97,515.05 1076.32,523.85 1078.68,515.05 1081.03,523.85 1083.39,515.05 1085.74,523.85 1088.10,515.05 1090.45,523.85 1092.80,515.05 1095.16,523.85 1097.51,515.05 1099.87,523.85 1102.22,515.05 1104.58,523.85 1106.93,515.05 1109.29,523.85 1111.64,515.05 1113.99,523.85 1116.35,515.05 1118.70,523.85 1121.06,515.05 1123.41,523.85 1125.77,515.05 1128.12,523.85 1130.48,515.05 1132.83,523.85 1135.19,515.05 1137.54,523.85 1139.89,515.05 1142.25,523.85 1144.60,515.05 1146.96,523.85 1149.31,515.05 1151.67,523.85 1154.02,515.05 1156.38,523.85 1158.73,515.05 1161.09,523.85 1163.44,515.05 1165.79,523.85 1168.15,515.05 1170.50,523.85 1172.86,515.05 1175.21,523.85 1177.57,515.05 1179.92,523.85 1182.28,515.05 1184.63,523.85 1186.98,515.05 1189.34,523.85 1191.69,515.05 1194.05,523.85 1196.40,515.05 1198.76,523.85 1201.11,515.05 1203.47,523.85 1205.82,515.05 1208.17,523.85 1210.53,515.05 1212.88,523.85 1215.24,515.05 1217.59,523.85 1219.95,515.05 1222.30,523.85 1224.66,515.05 1227.01,523.85 1229.37,515.05 1231.72,523.85 1234.07,515.05 1236.43,523.85 1238.78,515.05 1241.14,523.85 1243.49,515.05 1245.85,523.85 1248.20,515.05 1250.56,523.85 1252.91,515.05 1255.26,523.85 1257.62,515.05 1259.97,523.85 1262.33,515.05 1264.68,523.85 1267.04,515.05 1269.39,523.85 1271.75,515.05 1274.10,523.85 1276.46,515.05 1278.81,523.85 1281.16,515.05 1283.52,523.85 1285.87,515.05 1288.23,523.85 1290.58,515.05 1292.94,523.85 1295.29,515.05 1297.65,523.85 1300.00,515.05 1302.36,523.85 1304.71,515.05 1307.06,523.85 1309.42,515.05 1311.77,523.85 1314.13,515.05 1316.48,523.85 1318.84,515.05 1321.19,523.85 1323.55,515.05 1325.90,523.85 1328.25,515.05"/><path d="M372.33,515.05A2.35,2.35 0 0 1 377.04,515.05M374.68,523.85A2.35,2.35 0 0 0 379.39,523.85M377.04,515.05A2.35,2.35 0 0 1 381.75,515.05M379.39,523.85A2.35,2.35 0 0 0 384.10,523.85M381.75,515.05A2.35,2.35 0 0 1 386.45,515.05M384.10,523.85A2.35,2.35 0 0 0 388.81,523.85M386.45,515.05A2.35,2.35 0 0 1 391.16,515.05M388.81,523.85A2.35,2.35 0 0 0 393.52,523.85M391.16,515.05A2.35,2.35 0 0 1 395.87,515.05M393.52,523.85A2.35,2.35 0 0 0 398.23,523.85M395.87,515.05A2.35,2.35 0 0 1 400.58,515.05M398.23,523.85A2.35,2.35 0 0 0 402.94,523.85M400.58,515.05A2.35,2.35 0 0 1 405.29,515.05M402.94,523.85A2.35,2.35 0 0 0 407.65,523.85M405.29,515.05A2.35,2.35 0 0 1 410.00,515.05M407.65,523.85A2.35,2.35 0 0 0 412.35,523.85M410.00,515.05A2.35,2.35 0 0 1 414.71,515.05M412.35,523.85A2.35,2.35 0 0 0 417.06,523.85M414.71,515.05A2.35,2.35 0 0 1 419.42,515.05M417.06,523.85A2.35,2.35 0 0 0 421.77,523.85M419.42,515.05A2.35,2.35 0 0 1 424.13,515.05M421.77,523.85A2.35,2.35 0 0 0 426.48,523.85M424.13,515.05A2.35,2.35 0 0 1 428.84,515.05M426.48,523.85A2.35,2.35 0 0 0 431.19,523.85M428.84,515.05A2.35,2.35 0 0 1 433.54,515.05M431.19,523.85A2.35,2.35 0 0 0 435.90,523.85M433.54,515.05A2.35,2.35 0 0 1 438.25,515.05M435.90,523.85A2.35,2.35 0 0 0 440.61,523.85M438.25,515.05A2.35,2.35 0 0 1 442.96,515.05M440.61,523.85A2.35,2.35 0 0 0 445.32,523.85M442.96,515.05A2.35,2.35 0 0 1 447.67,515.05M445.32,523.85A2.35,2.35 0 0 0 450.03,523.85M447.67,515.05A2.35,2.35 0 0 1 452.38,515.05M450.03,523.85A2.35,2.35 0 0 0 454.74,523.85M452.38,515.05A2.35,2.35 0 0 1 457.09,515.05M454.74,523.85A2.35,2.35 0 0 0 459.44,523.85M457.09,515.05A2.35,2.35 0 0 1 461.80,515.05M459.44,523.85A2.35,2.35 0 0 0 464.15,523.85M461.80,515.05A2.35,2.35 0 0 1 466.51,515.05M464.15,523.85A2.35,2.35 0 0 0 468.86,523.85M466.51,515.05A2.35,2.35 0 0 1 471.22,515.05M468.86,523.85A2.35,2.35 0 0 0 473.57,523.85M471.22,515.05A2.35,2.35 0 0 1 475.93,515.05M473.57,523.85A2.35,2.35 0 0 0 478.28,523.85M475.93,515.05A2.35,2.35 0 0 1 480.63,515.05M478.28,523.85A2.35,2.35 0 0 0 482.99,523.85M480.63,515.05A2.35,2.35 0 0 1 485.34,515.05M482.99,523.85A2.35,2.35 0 0 0 487.70,523.85M485.34,515.05A2.35,2.35 0 0 1 490.05,515.05M487.70,523.85A2.35,2.35 0 0 0 492.41,523.85M490.05,515.05A2.35,2.35 0 0 1 494.76,515.05M492.41,523.85A2.35,2.35 0 0 0 497.12,523.85M494.76,515.05A2.35,2.35 0 0 1 499.47,515.05M497.12,523.85A2.35,2.35 0 0 0 501.82,523.85M499.47,515.05A2.35,2.35 0 0 1 504.18,515.05M501.83,523.85A2.35,2.35 0 0 0 506.53,523.85M504.18,515.05A2.35,2.35 0 0 1 508.89,515.05M506.53,523.85A2.35,2.35 0 0 0 511.24,523.85M508.89,515.05A2.35,2.35 0 0 1 513.60,515.05M511.24,523.85A2.35,2.35 0 0 0 515.95,523.85M513.60,515.05A2.35,2.35 0 0 1 518.31,515.05M515.95,523.85A2.35,2.35 0 0 0 520.66,523.85M518.31,515.05A2.35,2.35 0 0 1 523.02,515.05M520.66,523.85A2.35,2.35 0 0 0 525.37,523.85M523.02,515.05A2.35,2.35 0 0 1 527.72,515.05M525.37,523.85A2.35,2.35 0 0 0 530.08,523.85M527.72,515.05A2.35,2.35 0 0 1 532.43,515.05M530.08,523.85A2.35,2.35 0 0 0 534.79,523.85M532.43,515.05A2.35,2.35 0 0 1 537.14,515.05M534.79,523.85A2.35,2.35 0 0 0 539.50,523.85M537.14,515.05A2.35,2.35 0 0 1 541.85,515.05M539.50,523.85A2.35,2.35 0 0 0 544.21,523.85M541.85,515.05A2.35,2.35 0 0 1 546.56,515.05M544.21,523.85A2.35,2.35 0 0 0 548.91,523.85M546.56,515.05A2.35,2.35 0 0 1 551.27,515.05M548.91,523.85A2.35,2.35 0 0 0 553.62,523.85M551.27,515.05A2.35,2.35 0 0 1 555.98,515.05M553.62,523.85A2.35,2.35 0 0 0 558.33,523.85M555.98,515.05A2.35,2.35 0 0 1 560.69,515.05M558.33,523.85A2.35,2.35 0 0 0 563.04,523.85M560.69,515.05A2.35,2.35 0 0 1 565.40,515.05M563.04,523.85A2.35,2.35 0 0 0 567.75,523.85M565.40,515.05A2.35,2.35 0 0 1 570.11,515.05M567.75,523.85A2.35,2.35 0 0 0 572.46,523.85M570.11,515.05A2.35,2.35 0 0 1 574.81,515.05M572.46,523.85A2.35,2.35 0 0 0 577.17,523.85M574.81,515.05A2.35,2.35 0 0 1 579.52,515.05M577.17,523.85A2.35,2.35 0 0 0 581.88,523.85M579.52,515.05A2.35,2.35 0 0 1 584.23,515.05M581.88,523.85A2.35,2.35 0 0 0 586.59,523.85M584.23,515.05A2.35,2.35 0 0 1 588.94,515.05M586.59,523.85A2.35,2.35 0 0 0 591.30,523.85M588.94,515.05A2.35,2.35 0 0 1 593.65,515.05M591.30,523.85A2.35,2.35 0 0 0 596.00,523.85M593.65,515.05A2.35,2.35 0 0 1 598.36,515.05M596.00,523.85A2.35,2.35 0 0 0 600.71,523.85M598.36,515.05A2.35,2.35 0 0 1 603.07,515.05M600.71,523.85A2.35,2.35 0 0 0 605.42,523.85M603.07,515.05A2.35,2.35 0 0 1 607.78,515.05M605.42,523.85A2.35,2.35 0 0 0 610.13,523.85M607.78,515.05A2.35,2.35 0 0 1 612.49,515.05M610.13,523.85A2.35,2.35 0 0 0 614.84,523.85M612.49,515.05A2.35,2.35 0 0 1 617.20,515.05M614.84,523.85A2.35,2.35 0 0 0 619.55,523.85M617.20,515.05A2.35,2.35 0 0 1 621.90,515.05M619.55,523.85A2.35,2.35 0 0 0 624.26,523.85M621.90,515.05A2.35,2.35 0 0 1 626.61,515.05M624.26,523.85A2.35,2.35 0 0 0 628.97,523.85M626.61,515.05A2.35,2.35 0 0 1 631.32,515.05M628.97,523.85A2.35,2.35 0 0 0 633.68,523.85M631.32,515.05A2.35,2.35 0 0 1 636.03,515.05M633.68,523.85A2.35,2.35 0 0 0 638.39,523.85M636.03,515.05A2.35,2.35 0 0 1 640.74,515.05M638.39,523.85A2.35,2.35 0 0 0 643.09,523.85M640.74,515.05A2.35,2.35 0 0 1 645.45,515.05M643.10,523.85A2.35,2.35 0 0 0 647.80,523.85M645.45,515.05A2.35,2.35 0 0 1 650.16,515.05M647.80,523.85A2.35,2.35 0 0 0 652.51,523.85M650.16,515.05A2.35,2.35 0 0 1 654.87,515.05M652.51,523.85A2.35,2.35 0 0 0 657.22,523.85M654.87,515.05A2.35,2.35 0 0 1 659.58,515.05M657.22,523.85A2.35,2.35 0 0 0 661.93,523.85M659.58,515.05A2.35,2.35 0 0 1 664.29,515.05M661.93,523.85A2.35,2.35 0 0 0 666.64,523.85M664.29,515.05A2.35,2.35 0 0 1 668.99,515.05M666.64,523.85A2.35,2.35 0 0 0 671.35,523.85M668.99,515.05A2.35,2.35 0 0 1 673.70,515.05M671.35,523.85A2.35,2.35 0 0 0 676.06,523.85M673.70,515.05A2.35,2.35 0 0 1 678.41,515.05M676.06,523.85A2.35,2.35 0 0 0 680.77,523.85M678.41,515.05A2.35,2.35 0 0 1 683.12,515.05M680.77,523.85A2.35,2.35 0 0 0 685.48,523.85M683.12,515.05A2.35,2.35 0 0 1 687.83,515.05M685.48,523.85A2.35,2.35 0 0 0 690.18,523.85M687.83,515.05A2.35,2.35 0 0 1 692.54,515.05M690.18,523.85A2.35,2.35 0 0 0 694.89,523.85M692.54,515.05A2.35,2.35 0 0 1 697.25,515.05M694.89,523.85A2.35,2.35 0 0 0 699.60,523.85M697.25,515.05A2.35,2.35 0 0 1 701.96,515.05M699.60,523.85A2.35,2.35 0 0 0 704.31,523.85M701.96,515.05A2.35,2.35 0 0 1 706.67,515.05M704.31,523.85A2.35,2.35 0 0 0 709.02,523.85M706.67,515.05A2.35,2.35 0 0 1 711.38,515.05M709.02,523.85A2.35,2.35 0 0 0 713.73,523.85M711.38,515.05A2.35,2.35 0 0 1 716.08,515.05M713.73,523.85A2.35,2.35 0 0 0 718.44,523.85M716.08,515.05A2.35,2.35 0 0 1 720.79,515.05M718.44,523.85A2.35,2.35 0 0 0 723.15,523.85M720.79,515.05A2.35,2.35 0 0 1 725.50,515.05M723.15,523.85A2.35,2.35 0 0 0 727.86,523.85M725.50,515.05A2.35,2.35 0 0 1 730.21,515.05M727.86,523.85A2.35,2.35 0 0 0 732.57,523.85M730.21,515.05A2.35,2.35 0 0 1 734.92,515.05M732.57,523.85A2.35,2.35 0 0 0 737.27,523.85M734.92,515.05A2.35,2.35 0 0 1 739.63,515.05M737.27,523.85A2.35,2.35 0 0 0 741.98,523.85M739.63,515.05A2.35,2.35 0 0 1 744.34,515.05M741.98,523.85A2.35,2.35 0 0 0 746.69,523.85M744.34,515.05A2.35,2.35 0 0 1 749.05,515.05M746.69,523.85A2.35,2.35 0 0 0 751.40,523.85M749.05,515.05A2.35,2.35 0 0 1 753.76,515.05M751.40,523.85A2.35,2.35 0 0 0 756.11,523.85M753.76,515.05A2.35,2.35 0 0 1 758.47,515.05M756.11,523.85A2.35,2.35 0 0 0 760.82,523.85M758.47,515.05A2.35,2.35 0 0 1 763.17,515.05M760.82,523.85A2.35,2.35 0 0 0 765.53,523.85M763.17,515.05A2.35,2.35 0 0 1 767.88,515.05M765.53,523.85A2.35,2.35 0 0 0 770.24,523.85M767.88,515.05A2.35,2.35 0 0 1 772.59,515.05M770.24,523.85A2.35,2.35 0 0 0 774.95,523.85M772.59,515.05A2.35,2.35 0 0 1 777.30,515.05M774.95,523.85A2.35,2.35 0 0 0 779.66,523.85M777.30,515.05A2.35,2.35 0 0 1 782.01,515.05M779.66,523.85A2.35,2.35 0 0 0 784.36,523.85M782.01,515.05A2.35,2.35 0 0 1 786.72,515.05M784.37,523.85A2.35,2.35 0 0 0 789.07,523.85M786.72,515.05A2.35,2.35 0 0 1 791.43,515.05M789.07,523.85A2.35,2.35 0 0 0 793.78,523.85M791.43,515.05A2.35,2.35 0 0 1 796.14,515.05M793.78,523.85A2.35,2.35 0 0 0 798.49,523.85M796.14,515.05A2.35,2.35 0 0 1 800.85,515.05M798.49,523.85A2.35,2.35 0 0 0 803.20,523.85M800.85,515.05A2.35,2.35 0 0 1 805.56,515.05M803.20,523.85A2.35,2.35 0 0 0 807.91,523.85M805.56,515.05A2.35,2.35 0 0 1 810.26,515.05M807.91,523.85A2.35,2.35 0 0 0 812.62,523.85M810.26,515.05A2.35,2.35 0 0 1 814.97,515.05M812.62,523.85A2.35,2.35 0 0 0 817.33,523.85M814.97,515.05A2.35,2.35 0 0 1 819.68,515.05M817.33,523.85A2.35,2.35 0 0 0 822.04,523.85M819.68,515.05A2.35,2.35 0 0 1 824.39,515.05M822.04,523.85A2.35,2.35 0 0 0 826.75,523.85M824.39,515.05A2.35,2.35 0 0 1 829.10,515.05M826.75,523.85A2.35,2.35 0 0 0 831.45,523.85M829.10,515.05A2.35,2.35 0 0 1 833.81,515.05M831.45,523.85A2.35,2.35 0 0 0 836.16,523.85M833.81,515.05A2.35,2.35 0 0 1 838.52,515.05M836.16,523.85A2.35,2.35 0 0 0 840.87,523.85M838.52,515.05A2.35,2.35 0 0 1 843.23,515.05M840.87,523.85A2.35,2.35 0 0 0 845.58,523.85M843.23,515.05A2.35,2.35 0 0 1 847.94,515.05M845.58,523.85A2.35,2.35 0 0 0 850.29,523.85M847.94,515.05A2.35,2.35 0 0 1 852.65,515.05M850.29,523.85A2.35,2.35 0 0 0 855.00,523.85M852.65,515.05A2.35,2.35 0 0 1 857.35,515.05M855.00,523.85A2.35,2.35 0 0 0 859.71,523.85M857.35,515.05A2.35,2.35 0 0 1 862.06,515.05M859.71,523.85A2.35,2.35 0 0 0 864.42,523.85M862.06,515.05A2.35,2.35 0 0 1 866.77,515.05M864.42,523.85A2.35,2.35 0 0 0 869.13,523.85M866.77,515.05A2.35,2.35 0 0 1 871.48,515.05M869.13,523.85A2.35,2.35 0 0 0 873.84,523.85M871.48,515.05A2.35,2.35 0 0 1 876.19,515.05M873.84,523.85A2.35,2.35 0 0 0 878.54,523.85M876.19,515.05A2.35,2.35 0 0 1 880.90,515.05M878.54,523.85A2.35,2.35 0 0 0 883.25,523.85M880.90,515.05A2.35,2.35 0 0 1 885.61,515.05M883.25,523.85A2.35,2.35 0 0 0 887.96,523.85M885.61,515.05A2.35,2.35 0 0 1 890.32,515.05M887.96,523.85A2.35,2.35 0 0 0 892.67,523.85M890.32,515.05A2.35,2.35 0 0 1 895.03,515.05M892.67,523.85A2.35,2.35 0 0 0 897.38,523.85M895.03,515.05A2.35,2.35 0 0 1 899.74,515.05M897.38,523.85A2.35,2.35 0 0 0 902.09,523.85M899.74,515.05A2.35,2.35 0 0 1 904.44,515.05M902.09,523.85A2.35,2.35 0 0 0 906.80,523.85M904.44,515.05A2.35,2.35 0 0 1 909.15,515.05M906.80,523.85A2.35,2.35 0 0 0 911.51,523.85M909.15,515.05A2.35,2.35 0 0 1 913.86,515.05M911.51,523.85A2.35,2.35 0 0 0 916.22,523.85M913.86,515.05A2.35,2.35 0 0 1 918.57,515.05M916.22,523.85A2.35,2.35 0 0 0 920.93,523.85M918.57,515.05A2.35,2.35 0 0 1 923.28,515.05M920.93,523.85A2.35,2.35 0 0 0 925.63,523.85M923.28,515.05A2.35,2.35 0 0 1 927.99,515.05M925.63,523.85A2.35,2.35 0 0 0 930.34,523.85M927.99,515.05A2.35,2.35 0 0 1 932.70,515.05M930.34,523.85A2.35,2.35 0 0 0 935.05,523.85M932.70,515.05A2.35,2.35 0 0 1 937.41,515.05M935.05,523.85A2.35,2.35 0 0 0 939.76,523.85M937.41,515.05A2.35,2.35 0 0 1 942.12,515.05M939.76,523.85A2.35,2.35 0 0 0 944.47,523.85M942.12,515.05A2.35,2.35 0 0 1 946.83,515.05M944.47,523.85A2.35,2.35 0 0 0 949.18,523.85M946.83,515.05A2.35,2.35 0 0 1 951.53,515.05M949.18,523.85A2.35,2.35 0 0 0 953.89,523.85M951.53,515.05A2.35,2.35 0 0 1 956.24,515.05M953.89,523.85A2.35,2.35 0 0 0 958.60,523.85M956.24,515.05A2.35,2.35 0 0 1 960.95,515.05M958.60,523.85A2.35,2.35 0 0 0 963.31,523.85M960.95,515.05A2.35,2.35 0 0 1 965.66,515.05M963.31,523.85A2.35,2.35 0 0 0 968.02,523.85M965.66,515.05A2.35,2.35 0 0 1 970.37,515.05M968.02,523.85A2.35,2.35 0 0 0 972.72,523.85M970.37,515.05A2.35,2.35 0 0 1 975.08,515.05M972.73,523.85A2.35,2.35 0 0 0 977.43,523.85M975.08,515.05A2.35,2.35 0 0 1 979.79,515.05M977.43,523.85A2.35,2.35 0 0 0 982.14,523.85M979.79,515.05A2.35,2.35 0 0 1 984.50,515.05M982.14,523.85A2.35,2.35 0 0 0 986.85,523.85M984.50,515.05A2.35,2.35 0 0 1 989.21,515.05M986.85,523.85A2.35,2.35 0 0 0 991.56,523.85M989.21,515.05A2.35,2.35 0 0 1 993.92,515.05M991.56,523.85A2.35,2.35 0 0 0 996.27,523.85M993.92,515.05A2.35,2.35 0 0 1 998.62,515.05M996.27,523.85A2.35,2.35 0 0 0 1000.98,523.85M998.62,515.05A2.35,2.35 0 0 1 1003.33,515.05M1000.98,523.85A2.35,2.35 0 0 0 1005.69,523.85M1003.33,515.05A2.35,2.35 0 0 1 1008.04,515.05M1005.69,523.85A2.35,2.35 0 0 0 1010.40,523.85M1008.04,515.05A2.35,2.35 0 0 1 1012.75,515.05M1010.40,523.85A2.35,2.35 0 0 0 1015.11,523.85M1012.75,515.05A2.35,2.35 0 0 1 1017.46,515.05M1015.11,523.85A2.35,2.35 0 0 0 1019.81,523.85M1017.46,515.05A2.35,2.35 0 0 1 1022.17,515.05M1019.81,523.85A2.35,2.35 0 0 0 1024.52,523.85M1022.17,515.05A2.35,2.35 0 0 1 1026.88,515.05M1024.52,523.85A2.35,2.35 0 0 0 1029.23,523.85M1026.88,515.05A2.35,2.35 0 0 1 1031.59,515.05M1029.23,523.85A2.35,2.35 0 0 0 1033.94,523.85M1031.59,515.05A2.35,2.35 0 0 1 1036.30,515.05M1033.94,523.85A2.35,2.35 0 0 0 1038.65,523.85M1036.30,515.05A2.35,2.35 0 0 1 1041.01,515.05M1038.65,523.85A2.35,2.35 0 0 0 1043.36,523.85M1041.01,515.05A2.35,2.35 0 0 1 1045.71,515.05M1043.36,523.85A2.35,2.35 0 0 0 1048.07,523.85M1045.71,515.05A2.35,2.35 0 0 1 1050.42,515.05M1048.07,523.85A2.35,2.35 0 0 0 1052.78,523.85M1050.42,515.05A2.35,2.35 0 0 1 1055.13,515.05M1052.78,523.85A2.35,2.35 0 0 0 1057.49,523.85M1055.13,515.05A2.35,2.35 0 0 1 1059.84,515.05M1057.49,523.85A2.35,2.35 0 0 0 1062.20,523.85M1059.84,515.05A2.35,2.35 0 0 1 1064.55,515.05M1062.20,523.85A2.35,2.35 0 0 0 1066.90,523.85M1064.55,515.05A2.35,2.35 0 0 1 1069.26,515.05M1066.90,523.85A2.35,2.35 0 0 0 1071.61,523.85M1069.26,515.05A2.35,2.35 0 0 1 1073.97,515.05M1071.61,523.85A2.35,2.35 0 0 0 1076.32,523.85M1073.97,515.05A2.35,2.35 0 0 1 1078.68,515.05M1076.32,523.85A2.35,2.35 0 0 0 1081.03,523.85M1078.68,515.05A2.35,2.35 0 0 1 1083.39,515.05M1081.03,523.85A2.35,2.35 0 0 0 1085.74,523.85M1083.39,515.05A2.35,2.35 0 0 1 1088.10,515.05M1085.74,523.85A2.35,2.35 0 0 0 1090.45,523.85M1088.10,515.05A2.35,2.35 0 0 1 1092.80,515.05M1090.45,523.85A2.35,2.35 0 0 0 1095.16,523.85M1092.80,515.05A2.35,2.35 0 0 1 1097.51,515.05M1095.16,523.85A2.35,2.35 0 0 0 1099.87,523.85M1097.51,515.05A2.35,2.35 0 0 1 1102.22,515.05M1099.87,523.85A2.35,2.35 0 0 0 1104.58,523.85M1102.22,515.05A2.35,2.35 0 0 1 1106.93,515.05M1104.58,523.85A2.35,2.35 0 0 0 1109.29,523.85M1106.93,515.05A2.35,2.35 0 0 1 1111.64,515.05M1109.29,523.85A2.35,2.35 0 0 0 1114.00,523.85M1111.64,515.05A2.35,2.35 0 0 1 1116.35,515.05M1113.99,523.85A2.35,2.35 0 0 0 1118.70,523.85M1116.35,515.05A2.35,2.35 0 0 1 1121.06,515.05M1118.70,523.85A2.35,2.35 0 0 0 1123.41,523.85M1121.06,515.05A2.35,2.35 0 0 1 1125.77,515.05M1123.41,523.85A2.35,2.35 0 0 0 1128.12,523.85M1125.77,515.05A2.35,2.35 0 0 1 1130.48,515.05M1128.12,523.85A2.35,2.35 0 0 0 1132.83,523.85M1130.48,515.05A2.35,2.35 0 0 1 1135.19,515.05M1132.83,523.85A2.35,2.35 0 0 0 1137.54,523.85M1135.19,515.05A2.35,2.35 0 0 1 1139.89,515.05M1137.54,523.85A2.35,2.35 0 0 0 1142.25,523.85M1139.89,515.05A2.35,2.35 0 0 1 1144.60,515.05M1142.25,523.85A2.35,2.35 0 0 0 1146.96,523.85M1144.60,515.05A2.35,2.35 0 0 1 1149.31,515.05M1146.96,523.85A2.35,2.35 0 0 0 1151.67,523.85M1149.31,515.05A2.35,2.35 0 0 1 1154.02,515.05M1151.67,523.85A2.35,2.35 0 0 0 1156.38,523.85M1154.02,515.05A2.35,2.35 0 0 1 1158.73,515.05M1156.38,523.85A2.35,2.35 0 0 0 1161.09,523.85M1158.73,515.05A2.35,2.35 0 0 1 1163.44,515.05M1161.09,523.85A2.35,2.35 0 0 0 1165.79,523.85M1163.44,515.05A2.35,2.35 0 0 1 1168.15,515.05M1165.79,523.85A2.35,2.35 0 0 0 1170.50,523.85M1168.15,515.05A2.35,2.35 0 0 1 1172.86,515.05M1170.50,523.85A2.35,2.35 0 0 0 1175.21,523.85M1172.86,515.05A2.35,2.35 0 0 1 1177.57,515.05M1175.21,523.85A2.35,2.35 0 0 0 1179.92,523.85M1177.57,515.05A2.35,2.35 0 0 1 1182.28,515.05M1179.92,523.85A2.35,2.35 0 0 0 1184.63,523.85M1182.28,515.05A2.35,2.35 0 0 1 1186.98,515.05M1184.63,523.85A2.35,2.35 0 0 0 1189.34,523.85M1186.98,515.05A2.35,2.35 0 0 1 1191.69,515.05M1189.34,523.85A2.35,2.35 0 0 0 1194.05,523.85M1191.69,515.05A2.35,2.35 0 0 1 1196.40,515.05M1194.05,523.85A2.35,2.35 0 0 0 1198.76,523.85M1196.40,515.05A2.35,2.35 0 0 1 1201.11,515.05M1198.76,523.85A2.35,2.35 0 0 0 1203.47,523.85M1201.11,515.05A2.35,2.35 0 0 1 1205.82,515.05M1203.47,523.85A2.35,2.35 0 0 0 1208.17,523.85M1205.82,515.05A2.35,2.35 0 0 1 1210.53,515.05M1208.17,523.85A2.35,2.35 0 0 0 1212.88,523.85M1210.53,515.05A2.35,2.35 0 0 1 1215.24,515.05M1212.88,523.85A2.35,2.35 0 0 0 1217.59,523.85M1215.24,515.05A2.35,2.35 0 0 1 1219.95,515.05M1217.59,523.85A2.35,2.35 0 0 0 1222.30,523.85M1219.95,515.05A2.35,2.35 0 0 1 1224.66,515.05M1222.30,523.85A2.35,2.35 0 0 0 1227.01,523.85M1224.66,515.05A2.35,2.35 0 0 1 1229.37,515.05M1227.01,523.85A2.35,2.35 0 0 0 1231.72,523.85M1229.37,515.05A2.35,2.35 0 0 1 1234.07,515.05M1231.72,523.85A2.35,2.35 0 0 0 1236.43,523.85M1234.07,515.05A2.35,2.35 0 0 1 1238.78,515.05M1236.43,523.85A2.35,2.35 0 0 0 1241.14,523.85M1238.78,515.05A2.35,2.35 0 0 1 1243.49,515.05M1241.14,523.85A2.35,2.35 0 0 0 1245.85,523.85M1243.49,515.05A2.35,2.35 0 0 1 1248.20,515.05M1245.85,523.85A2.35,2.35 0 0 0 1250.56,523.85M1248.20,515.05A2.35,2.35 0 0 1 1252.91,515.05M1250.56,523.85A2.35,2.35 0 0 0 1255.27,523.85M1252.91,515.05A2.35,2.35 0 0 1 1257.62,515.05M1255.26,523.85A2.35,2.35 0 0 0 1259.97,523.85M1257.62,515.05A2.35,2.35 0 0 1 1262.33,515.05M1259.97,523.85A2.35,2.35 0 0 0 1264.68,523.85M1262.33,515.05A2.35,2.35 0 0 1 1267.04,515.05M1264.68,523.85A2.35,2.35 0 0 0 1269.39,523.85M1267.04,515.05A2.35,2.35 0 0 1 1271.75,515.05M1269.39,523.85A2.35,2.35 0 0 0 1274.10,523.85M1271.75,515.05A2.35,2.35 0 0 1 1276.46,515.05M1274.10,523.85A2.35,2.35 0 0 0 1278.81,523.85M1276.46,515.05A2.35,2.35 0 0 1 1281.16,515.05M1278.81,523.85A2.35,2.35 0 0 0 1283.52,523.85M1281.16,515.05A2.35,2.35 0 0 1 1285.87,515.05M1283.52,523.85A2.35,2.35 0 0 0 1288.23,523.85M1285.87,515.05A2.35,2.35 0 0 1 1290.58,515.05M1288.23,523.85A2.35,2.35 0 0 0 1292.94,523.85M1290.58,515.05A2.35,2.35 0 0 1 1295.29,515.05M1292.94,523.85A2.35,2.35 0 0 0 1297.65,523.85M1295.29,515.05A2.35,2.35 0 0 1 1300.00,515.05M1297.65,523.85A2.35,2.35 0 0 0 1302.36,523.85M1300.00,515.05A2.35,2.35 0 0 1 1304.71,515.05M1302.36,523.85A2.35,2.35 0 0 0 1307.06,523.85M1304.71,515.05A2.35,2.35 0 0 1 1309.42,515.05M1307.06,523.85A2.35,2.35 0 0 0 1311.77,523.85M1309.42,515.05A2.35,2.35 0 0 1 1314.13,515.05M1311.77,523.85A2.35,2.35 0 0 0 1316.48,523.85M1314.13,515.05A2.35,2.35 0 0 1 1318.84,515.05M1316.48,523.85A2.35,2.35 0 0 0 1321.19,523.85M1318.84,515.05A2.35,2.35 0 0 1 1323.55,515.05M1321.19,523.85A2.35,2.35 0 0 0 1325.90,523.85M1323.55,515.05A2.35,2.35 0 0 1 1328.25,515.05M1325.90,523.85A2.35,2.35 0 0 0 1330.61,523.85"/></g><rect x="380.0" y="526.6" width="942.0" height="28.40" fill="#fdfa9c"/><g clip-path="url(#c3)" fill="none" stroke="#5e5a18" stroke-width="0.95"><polyline points="365.56,549.89 370.27,531.71 374.98,549.89 379.69,531.71 384.40,549.89 389.11,531.71 393.82,549.89 398.53,531.71 403.24,549.89 407.94,531.71 412.65,549.89 417.36,531.71 422.07,549.89 426.78,531.71 431.49,549.89 436.20,531.71 440.91,549.89 445.62,531.71 450.33,549.89 455.03,531.71 459.74,549.89 464.45,531.71 469.16,549.89 473.87,531.71 478.58,549.89 483.29,531.71 488.00,549.89 492.71,531.71 497.42,549.89 502.12,531.71 506.83,549.89 511.54,531.71 516.25,549.89 520.96,531.71 525.67,549.89 530.38,531.71 535.09,549.89 539.80,531.71 544.51,549.89 549.21,531.71 553.92,549.89 558.63,531.71 563.34,549.89 568.05,531.71 572.76,549.89 577.47,531.71 582.18,549.89 586.89,531.71 591.60,549.89 596.30,531.71 601.01,549.89 605.72,531.71 610.43,549.89 615.14,531.71 619.85,549.89 624.56,531.71 629.27,549.89 633.98,531.71 638.69,549.89 643.39,531.71 648.10,549.89 652.81,531.71 657.52,549.89 662.23,531.71 666.94,549.89 671.65,531.71 676.36,549.89 681.07,531.71 685.78,549.89 690.48,531.71 695.19,549.89 699.90,531.71 704.61,549.89 709.32,531.71 714.03,549.89 718.74,531.71 723.45,549.89 728.16,531.71 732.87,549.89 737.57,531.71 742.28,549.89 746.99,531.71 751.70,549.89 756.41,531.71 761.12,549.89 765.83,531.71 770.54,549.89 775.25,531.71 779.96,549.89 784.66,531.71 789.37,549.89 794.08,531.71 798.79,549.89 803.50,531.71 808.21,549.89 812.92,531.71 817.63,549.89 822.34,531.71 827.05,549.89 831.75,531.71 836.46,549.89 841.17,531.71 845.88,549.89 850.59,531.71 855.30,549.89 860.01,531.71 864.72,549.89 869.43,531.71 874.14,549.89 878.84,531.71 883.55,549.89 888.26,531.71 892.97,549.89 897.68,531.71 902.39,549.89 907.10,531.71 911.81,549.89 916.52,531.71 921.23,549.89 925.93,531.71 930.64,549.89 935.35,531.71 940.06,549.89 944.77,531.71 949.48,549.89 954.19,531.71 958.90,549.89 963.61,531.71 968.32,549.89 973.02,531.71 977.73,549.89 982.44,531.71 987.15,549.89 991.86,531.71 996.57,549.89 1001.28,531.71 1005.99,549.89 1010.70,531.71 1015.41,549.89 1020.11,531.71 1024.82,549.89 1029.53,531.71 1034.24,549.89 1038.95,531.71 1043.66,549.89 1048.37,531.71 1053.08,549.89 1057.79,531.71 1062.50,549.89 1067.21,531.71 1071.91,549.89 1076.62,531.71 1081.33,549.89 1086.04,531.71 1090.75,549.89 1095.46,531.71 1100.17,549.89 1104.88,531.71 1109.59,549.89 1114.29,531.71 1119.00,549.89 1123.71,531.71 1128.42,549.89 1133.13,531.71 1137.84,549.89 1142.55,531.71 1147.26,549.89 1151.97,531.71 1156.68,549.89 1161.38,531.71 1166.09,549.89 1170.80,531.71 1175.51,549.89 1180.22,531.71 1184.93,549.89 1189.64,531.71 1194.35,549.89 1199.06,531.71 1203.77,549.89 1208.48,531.71 1213.18,549.89 1217.89,531.71 1222.60,549.89 1227.31,531.71 1232.02,549.89 1236.73,531.71 1241.44,549.89 1246.15,531.71 1250.86,549.89 1255.56,531.71 1260.27,549.89 1264.98,531.71 1269.69,549.89 1274.40,531.71 1279.11,549.89 1283.82,531.71 1288.53,549.89 1293.24,531.71 1297.95,549.89 1302.65,531.71 1307.36,549.89 1312.07,531.71 1316.78,549.89 1321.49,531.71 1326.20,549.89 1330.91,531.71"/><path d="M360.85,531.71A4.71,4.71 0 0 1 370.27,531.71M365.56,549.89A4.71,4.71 0 0 0 374.98,549.89M370.27,531.71A4.71,4.71 0 0 1 379.69,531.71M374.98,549.89A4.71,4.71 0 0 0 384.40,549.89M379.69,531.71A4.71,4.71 0 0 1 389.11,531.71M384.40,549.89A4.71,4.71 0 0 0 393.82,549.89M389.11,531.71A4.71,4.71 0 0 1 398.53,531.71M393.82,549.89A4.71,4.71 0 0 0 403.24,549.89M398.53,531.71A4.71,4.71 0 0 1 407.94,531.71M403.24,549.89A4.71,4.71 0 0 0 412.65,549.89M407.94,531.71A4.71,4.71 0 0 1 417.36,531.71M412.65,549.89A4.71,4.71 0 0 0 422.07,549.89M417.36,531.71A4.71,4.71 0 0 1 426.78,531.71M422.07,549.89A4.71,4.71 0 0 0 431.49,549.89M426.78,531.71A4.71,4.71 0 0 1 436.20,531.71M431.49,549.89A4.71,4.71 0 0 0 440.91,549.89M436.20,531.71A4.71,4.71 0 0 1 445.62,531.71M440.91,549.89A4.71,4.71 0 0 0 450.33,549.89M445.62,531.71A4.71,4.71 0 0 1 455.03,531.71M450.33,549.89A4.71,4.71 0 0 0 459.74,549.89M455.03,531.71A4.71,4.71 0 0 1 464.45,531.71M459.74,549.89A4.71,4.71 0 0 0 469.16,549.89M464.45,531.71A4.71,4.71 0 0 1 473.87,531.71M469.16,549.89A4.71,4.71 0 0 0 478.58,549.89M473.87,531.71A4.71,4.71 0 0 1 483.29,531.71M478.58,549.89A4.71,4.71 0 0 0 488.00,549.89M483.29,531.71A4.71,4.71 0 0 1 492.71,531.71M488.00,549.89A4.71,4.71 0 0 0 497.42,549.89M492.71,531.71A4.71,4.71 0 0 1 502.12,531.71M497.42,549.89A4.71,4.71 0 0 0 506.83,549.89M502.12,531.71A4.71,4.71 0 0 1 511.54,531.71M506.83,549.89A4.71,4.71 0 0 0 516.25,549.89M511.54,531.71A4.71,4.71 0 0 1 520.96,531.71M516.25,549.89A4.71,4.71 0 0 0 525.67,549.89M520.96,531.71A4.71,4.71 0 0 1 530.38,531.71M525.67,549.89A4.71,4.71 0 0 0 535.09,549.89M530.38,531.71A4.71,4.71 0 0 1 539.80,531.71M535.09,549.89A4.71,4.71 0 0 0 544.51,549.89M539.80,531.71A4.71,4.71 0 0 1 549.21,531.71M544.51,549.89A4.71,4.71 0 0 0 553.92,549.89M549.22,531.71A4.71,4.71 0 0 1 558.63,531.71M553.92,549.89A4.71,4.71 0 0 0 563.34,549.89M558.63,531.71A4.71,4.71 0 0 1 568.05,531.71M563.34,549.89A4.71,4.71 0 0 0 572.76,549.89M568.05,531.71A4.71,4.71 0 0 1 577.47,531.71M572.76,549.89A4.71,4.71 0 0 0 582.18,549.89M577.47,531.71A4.71,4.71 0 0 1 586.89,531.71M582.18,549.89A4.71,4.71 0 0 0 591.60,549.89M586.89,531.71A4.71,4.71 0 0 1 596.30,531.71M591.60,549.89A4.71,4.71 0 0 0 601.01,549.89M596.30,531.71A4.71,4.71 0 0 1 605.72,531.71M601.01,549.89A4.71,4.71 0 0 0 610.43,549.89M605.72,531.71A4.71,4.71 0 0 1 615.14,531.71M610.43,549.89A4.71,4.71 0 0 0 619.85,549.89M615.14,531.71A4.71,4.71 0 0 1 624.56,531.71M619.85,549.89A4.71,4.71 0 0 0 629.27,549.89M624.56,531.71A4.71,4.71 0 0 1 633.98,531.71M629.27,549.89A4.71,4.71 0 0 0 638.69,549.89M633.98,531.71A4.71,4.71 0 0 1 643.39,531.71M638.69,549.89A4.71,4.71 0 0 0 648.10,549.89M643.39,531.71A4.71,4.71 0 0 1 652.81,531.71M648.10,549.89A4.71,4.71 0 0 0 657.52,549.89M652.81,531.71A4.71,4.71 0 0 1 662.23,531.71M657.52,549.89A4.71,4.71 0 0 0 666.94,549.89M662.23,531.71A4.71,4.71 0 0 1 671.65,531.71M666.94,549.89A4.71,4.71 0 0 0 676.36,549.89M671.65,531.71A4.71,4.71 0 0 1 681.07,531.71M676.36,549.89A4.71,4.71 0 0 0 685.78,549.89M681.07,531.71A4.71,4.71 0 0 1 690.48,531.71M685.78,549.89A4.71,4.71 0 0 0 695.19,549.89M690.49,531.71A4.71,4.71 0 0 1 699.90,531.71M695.19,549.89A4.71,4.71 0 0 0 704.61,549.89M699.90,531.71A4.71,4.71 0 0 1 709.32,531.71M704.61,549.89A4.71,4.71 0 0 0 714.03,549.89M709.32,531.71A4.71,4.71 0 0 1 718.74,531.71M714.03,549.89A4.71,4.71 0 0 0 723.45,549.89M718.74,531.71A4.71,4.71 0 0 1 728.16,531.71M723.45,549.89A4.71,4.71 0 0 0 732.87,549.89M728.16,531.71A4.71,4.71 0 0 1 737.57,531.71M732.87,549.89A4.71,4.71 0 0 0 742.28,549.89M737.57,531.71A4.71,4.71 0 0 1 746.99,531.71M742.28,549.89A4.71,4.71 0 0 0 751.70,549.89M746.99,531.71A4.71,4.71 0 0 1 756.41,531.71M751.70,549.89A4.71,4.71 0 0 0 761.12,549.89M756.41,531.71A4.71,4.71 0 0 1 765.83,531.71M761.12,549.89A4.71,4.71 0 0 0 770.54,549.89M765.83,531.71A4.71,4.71 0 0 1 775.25,531.71M770.54,549.89A4.71,4.71 0 0 0 779.96,549.89M775.25,531.71A4.71,4.71 0 0 1 784.66,531.71M779.96,549.89A4.71,4.71 0 0 0 789.37,549.89M784.67,531.71A4.71,4.71 0 0 1 794.08,531.71M789.37,549.89A4.71,4.71 0 0 0 798.79,549.89M794.08,531.71A4.71,4.71 0 0 1 803.50,531.71M798.79,549.89A4.71,4.71 0 0 0 808.21,549.89M803.50,531.71A4.71,4.71 0 0 1 812.92,531.71M808.21,549.89A4.71,4.71 0 0 0 817.63,549.89M812.92,531.71A4.71,4.71 0 0 1 822.34,531.71M817.63,549.89A4.71,4.71 0 0 0 827.05,549.89M822.34,531.71A4.71,4.71 0 0 1 831.75,531.71M827.05,549.89A4.71,4.71 0 0 0 836.46,549.89M831.75,531.71A4.71,4.71 0 0 1 841.17,531.71M836.46,549.89A4.71,4.71 0 0 0 845.88,549.89M841.17,531.71A4.71,4.71 0 0 1 850.59,531.71M845.88,549.89A4.71,4.71 0 0 0 855.30,549.89M850.59,531.71A4.71,4.71 0 0 1 860.01,531.71M855.30,549.89A4.71,4.71 0 0 0 864.72,549.89M860.01,531.71A4.71,4.71 0 0 1 869.43,531.71M864.72,549.89A4.71,4.71 0 0 0 874.14,549.89M869.43,531.71A4.71,4.71 0 0 1 878.84,531.71M874.14,549.89A4.71,4.71 0 0 0 883.55,549.89M878.84,531.71A4.71,4.71 0 0 1 888.26,531.71M883.55,549.89A4.71,4.71 0 0 0 892.97,549.89M888.26,531.71A4.71,4.71 0 0 1 897.68,531.71M892.97,549.89A4.71,4.71 0 0 0 902.39,549.89M897.68,531.71A4.71,4.71 0 0 1 907.10,531.71M902.39,549.89A4.71,4.71 0 0 0 911.81,549.89M907.10,531.71A4.71,4.71 0 0 1 916.52,531.71M911.81,549.89A4.71,4.71 0 0 0 921.23,549.89M916.52,531.71A4.71,4.71 0 0 1 925.93,531.71M921.23,549.89A4.71,4.71 0 0 0 930.64,549.89M925.93,531.71A4.71,4.71 0 0 1 935.35,531.71M930.64,549.89A4.71,4.71 0 0 0 940.06,549.89M935.35,531.71A4.71,4.71 0 0 1 944.77,531.71M940.06,549.89A4.71,4.71 0 0 0 949.48,549.89M944.77,531.71A4.71,4.71 0 0 1 954.19,531.71M949.48,549.89A4.71,4.71 0 0 0 958.90,549.89M954.19,531.71A4.71,4.71 0 0 1 963.61,531.71M958.90,549.89A4.71,4.71 0 0 0 968.32,549.89M963.61,531.71A4.71,4.71 0 0 1 973.02,531.71M968.32,549.89A4.71,4.71 0 0 0 977.73,549.89M973.02,531.71A4.71,4.71 0 0 1 982.44,531.71M977.73,549.89A4.71,4.71 0 0 0 987.15,549.89M982.44,531.71A4.71,4.71 0 0 1 991.86,531.71M987.15,549.89A4.71,4.71 0 0 0 996.57,549.89M991.86,531.71A4.71,4.71 0 0 1 1001.28,531.71M996.57,549.89A4.71,4.71 0 0 0 1005.99,549.89M1001.28,531.71A4.71,4.71 0 0 1 1010.70,531.71M1005.99,549.89A4.71,4.71 0 0 0 1015.41,549.89M1010.70,531.71A4.71,4.71 0 0 1 1020.11,531.71M1015.41,549.89A4.71,4.71 0 0 0 1024.82,549.89M1020.12,531.71A4.71,4.71 0 0 1 1029.53,531.71M1024.82,549.89A4.71,4.71 0 0 0 1034.24,549.89M1029.53,531.71A4.71,4.71 0 0 1 1038.95,531.71M1034.24,549.89A4.71,4.71 0 0 0 1043.66,549.89M1038.95,531.71A4.71,4.71 0 0 1 1048.37,531.71M1043.66,549.89A4.71,4.71 0 0 0 1053.08,549.89M1048.37,531.71A4.71,4.71 0 0 1 1057.79,531.71M1053.08,549.89A4.71,4.71 0 0 0 1062.50,549.89M1057.79,531.71A4.71,4.71 0 0 1 1067.21,531.71M1062.50,549.89A4.71,4.71 0 0 0 1071.91,549.89M1067.20,531.71A4.71,4.71 0 0 1 1076.62,531.71M1071.91,549.89A4.71,4.71 0 0 0 1081.33,549.89M1076.62,531.71A4.71,4.71 0 0 1 1086.04,531.71M1081.33,549.89A4.71,4.71 0 0 0 1090.75,549.89M1086.04,531.71A4.71,4.71 0 0 1 1095.46,531.71M1090.75,549.89A4.71,4.71 0 0 0 1100.17,549.89M1095.46,531.71A4.71,4.71 0 0 1 1104.88,531.71M1100.17,549.89A4.71,4.71 0 0 0 1109.59,549.89M1104.88,531.71A4.71,4.71 0 0 1 1114.29,531.71M1109.59,549.89A4.71,4.71 0 0 0 1119.00,549.89M1114.29,531.71A4.71,4.71 0 0 1 1123.71,531.71M1119.00,549.89A4.71,4.71 0 0 0 1128.42,549.89M1123.71,531.71A4.71,4.71 0 0 1 1133.13,531.71M1128.42,549.89A4.71,4.71 0 0 0 1137.84,549.89M1133.13,531.71A4.71,4.71 0 0 1 1142.55,531.71M1137.84,549.89A4.71,4.71 0 0 0 1147.26,549.89M1142.55,531.71A4.71,4.71 0 0 1 1151.97,531.71M1147.26,549.89A4.71,4.71 0 0 0 1156.68,549.89M1151.97,531.71A4.71,4.71 0 0 1 1161.38,531.71M1156.68,549.89A4.71,4.71 0 0 0 1166.09,549.89M1161.38,531.71A4.71,4.71 0 0 1 1170.80,531.71M1166.09,549.89A4.71,4.71 0 0 0 1175.51,549.89M1170.80,531.71A4.71,4.71 0 0 1 1180.22,531.71M1175.51,549.89A4.71,4.71 0 0 0 1184.93,549.89M1180.22,531.71A4.71,4.71 0 0 1 1189.64,531.71M1184.93,549.89A4.71,4.71 0 0 0 1194.35,549.89M1189.64,531.71A4.71,4.71 0 0 1 1199.06,531.71M1194.35,549.89A4.71,4.71 0 0 0 1203.77,549.89M1199.06,531.71A4.71,4.71 0 0 1 1208.48,531.71M1203.77,549.89A4.71,4.71 0 0 0 1213.18,549.89M1208.47,531.71A4.71,4.71 0 0 1 1217.89,531.71M1213.18,549.89A4.71,4.71 0 0 0 1222.60,549.89M1217.89,531.71A4.71,4.71 0 0 1 1227.31,531.71M1222.60,549.89A4.71,4.71 0 0 0 1232.02,549.89M1227.31,531.71A4.71,4.71 0 0 1 1236.73,531.71M1232.02,549.89A4.71,4.71 0 0 0 1241.44,549.89M1236.73,531.71A4.71,4.71 0 0 1 1246.15,531.71M1241.44,549.89A4.71,4.71 0 0 0 1250.86,549.89M1246.15,531.71A4.71,4.71 0 0 1 1255.56,531.71M1250.86,549.89A4.71,4.71 0 0 0 1260.27,549.89M1255.56,531.71A4.71,4.71 0 0 1 1264.98,531.71M1260.27,549.89A4.71,4.71 0 0 0 1269.69,549.89M1264.98,531.71A4.71,4.71 0 0 1 1274.40,531.71M1269.69,549.89A4.71,4.71 0 0 0 1279.11,549.89M1274.40,531.71A4.71,4.71 0 0 1 1283.82,531.71M1279.11,549.89A4.71,4.71 0 0 0 1288.53,549.89M1283.82,531.71A4.71,4.71 0 0 1 1293.24,531.71M1288.53,549.89A4.71,4.71 0 0 0 1297.95,549.89M1293.24,531.71A4.71,4.71 0 0 1 1302.65,531.71M1297.95,549.89A4.71,4.71 0 0 0 1307.36,549.89M1302.65,531.71A4.71,4.71 0 0 1 1312.07,531.71M1307.36,549.89A4.71,4.71 0 0 0 1316.78,549.89M1312.07,531.71A4.71,4.71 0 0 1 1321.49,531.71M1316.78,549.89A4.71,4.71 0 0 0 1326.20,549.89M1321.49,531.71A4.71,4.71 0 0 1 1330.91,531.71M1326.20,549.89A4.71,4.71 0 0 0 1335.62,549.89"/></g><line x1="380.0" y1="526.6" x2="1322.0" y2="526.6" stroke="#8a8440" stroke-width="0.9"/><g stroke="#8a8a8a" stroke-width="1"><line x1="380.0" y1="484.2" x2="1322.0" y2="484.2"/><line x1="380.0" y1="493.7" x2="1322.0" y2="493.7"/><line x1="380.0" y1="512.3" x2="1322.0" y2="512.3"/><line x1="380.0" y1="564.6" x2="1322.0" y2="564.6"/><line x1="380.0" y1="677.4" x2="1322.0" y2="677.4"/></g><rect x="380.0" y="677.4" width="942.0" height="47.40" fill="#c9b794"/><line x1="380.0" y1="677.4" x2="1322.0" y2="677.4" stroke="#8a8070" stroke-width="1.2"/><line x1="380.0" y1="724.8" x2="1322.0" y2="724.8" stroke="#8a8070" stroke-width="1"/><polygon points="406.7,690.6 404.5,699.6 397.2,703.1 392.5,697.1 393.1,688.4 401.2,685.9" fill="#ececec" stroke="#707070" stroke-width="0.9"/><polygon points="456.1,681.6 454.9,687.1 448.3,688.3 445.3,681.5 449.9,677.2" fill="#ececec" stroke="#707070" stroke-width="0.9"/><polygon points="456.9,684.6 461.0,681.6 465.6,682.2 467.2,689.4 462.5,692.9 456.6,690.0" fill="#d6d6d8" stroke="#707070" stroke-width="0.9"/><polygon points="464.4,696.3 461.5,692.7 462.9,685.8 469.5,685.6 472.5,690.8 471.6,695.2" fill="#dedede" stroke="#707070" stroke-width="0.9"/><polygon points="440.4,698.0 439.6,693.2 445.8,689.7 450.2,690.4 452.7,697.0 451.8,700.4 444.8,702.4" fill="#f2f2f2" stroke="#707070" stroke-width="0.9"/><polygon points="404.8,719.7 400.6,716.9 399.9,710.7 402.7,705.6 409.0,706.5 413.8,711.9 411.4,716.8" fill="#ececec" stroke="#707070" stroke-width="0.9"/><polygon points="437.5,709.1 437.8,714.7 433.2,720.8 425.4,716.4 424.5,712.3 428.6,706.7" fill="#ececec" stroke="#707070" stroke-width="0.9"/><polygon points="446.0,730.3 439.7,727.5 440.8,720.0 445.5,718.5 449.9,722.8 449.4,729.2" fill="#ececec" stroke="#707070" stroke-width="0.9"/><polygon points="471.9,728.0 470.8,721.2 476.8,714.7 480.6,714.5 486.0,719.5 485.2,728.8 477.6,730.0" fill="#dedede" stroke="#707070" stroke-width="0.9"/><polygon points="513.9,714.5 508.5,715.7 502.4,711.7 503.8,707.1 507.4,704.7 513.2,705.1 515.4,711.2" fill="#e6e6e6" stroke="#707070" stroke-width="0.9"/><polygon points="523.6,705.0 522.1,710.6 516.3,713.9 511.2,707.6 512.9,703.1 518.3,699.7" fill="#ececec" stroke="#707070" stroke-width="0.9"/><polygon points="514.9,716.6 522.5,716.9 526.1,720.5 523.1,728.2 517.2,729.8 512.0,722.3" fill="#d6d6d8" stroke="#707070" stroke-width="0.9"/><polygon points="536.6,695.3 529.0,693.8 526.6,688.1 531.2,683.5 538.8,683.5 542.5,690.1" fill="#ececec" stroke="#707070" stroke-width="0.9"/><polygon points="546.5,688.2 549.2,683.0 558.3,684.6 557.7,691.3 552.8,694.3" fill="#f2f2f2" stroke="#707070" stroke-width="0.9"/><polygon points="545.8,715.0 550.9,721.4 543.1,729.2 536.5,727.2 535.6,715.2" fill="#dedede" stroke="#707070" stroke-width="0.9"/><polygon points="564.5,702.9 569.7,702.5 576.2,707.7 575.7,712.8 570.2,716.3 563.7,712.5 562.2,708.8" fill="#dedede" stroke="#707070" stroke-width="0.9"/><polygon points="565.0,729.1 558.5,724.5 559.0,718.8 566.9,716.0 572.0,720.9 571.0,726.7" fill="#e6e6e6" stroke="#707070" stroke-width="0.9"/><polygon points="592.2,715.3 595.5,718.7 596.2,725.5 594.1,729.2 586.4,728.4 582.7,722.1 585.2,719.0" fill="#e6e6e6" stroke="#707070" stroke-width="0.9"/><polygon points="600.8,691.7 611.6,682.1 621.4,687.3 620.9,699.7 608.7,702.7" fill="#d6d6d8" stroke="#707070" stroke-width="0.9"/><polygon points="614.0,705.2 618.8,707.0 621.5,715.3 617.8,717.5 611.3,716.8 609.3,712.0" fill="#f2f2f2" stroke="#707070" stroke-width="0.9"/><polygon points="610.7,712.5 610.5,722.1 601.9,725.1 597.7,719.3 602.9,711.5" fill="#dedede" stroke="#707070" stroke-width="0.9"/><polygon points="630.8,696.8 634.4,698.2 636.1,702.2 632.8,706.9 627.1,705.3 626.1,700.7" fill="#e6e6e6" stroke="#707070" stroke-width="0.9"/><polygon points="650.9,688.2 647.4,692.4 640.5,693.1 639.3,685.8 645.4,681.4" fill="#f2f2f2" stroke="#707070" stroke-width="0.9"/><polygon points="656.6,729.0 648.0,727.8 641.7,725.3 642.3,713.4 652.1,705.8 659.7,711.2 661.9,720.3" fill="#e6e6e6" stroke="#707070" stroke-width="0.9"/><polygon points="647.3,725.6 642.2,731.7 637.8,732.7 628.0,724.4 630.6,719.3 639.1,712.9 644.5,716.4" fill="#d6d6d8" stroke="#707070" stroke-width="0.9"/><polygon points="671.3,714.2 667.7,708.7 665.8,697.4 675.5,695.2 683.3,699.9 681.7,710.5" fill="#ececec" stroke="#707070" stroke-width="0.9"/><polygon points="670.2,709.9 669.6,714.3 663.6,717.5 660.4,716.3 659.3,708.3 661.3,706.6 668.6,706.9" fill="#e6e6e6" stroke="#707070" stroke-width="0.9"/><polygon points="681.0,685.7 692.5,687.7 691.9,696.1 686.1,700.3 678.5,696.2" fill="#f2f2f2" stroke="#707070" stroke-width="0.9"/><polygon points="694.9,711.4 687.6,705.4 684.7,692.3 697.1,685.2 707.9,691.7 709.2,702.8" fill="#d6d6d8" stroke="#707070" stroke-width="0.9"/><polygon points="706.5,695.6 703.6,684.8 717.2,681.1 723.6,690.4 716.5,698.5" fill="#d6d6d8" stroke="#707070" stroke-width="0.9"/><polygon points="728.8,694.1 723.1,689.0 725.4,683.2 732.7,681.1 738.0,687.1 736.0,693.3" fill="#e6e6e6" stroke="#707070" stroke-width="0.9"/><polygon points="745.0,687.2 736.4,691.7 732.7,688.2 731.2,682.9 737.2,678.4 743.4,681.8" fill="#ececec" stroke="#707070" stroke-width="0.9"/><polygon points="728.9,689.2 739.1,689.2 743.7,697.6 736.0,704.2 726.9,695.6" fill="#d6d6d8" stroke="#707070" stroke-width="0.9"/><polygon points="738.5,697.6 742.9,691.0 748.8,692.4 752.0,699.8 745.0,703.9" fill="#e6e6e6" stroke="#707070" stroke-width="0.9"/><polygon points="721.9,716.5 715.2,722.7 709.5,721.5 705.3,714.9 706.1,708.7 713.6,704.8 720.4,712.1" fill="#d6d6d8" stroke="#707070" stroke-width="0.9"/><polygon points="701.8,712.9 703.4,717.0 698.3,721.9 694.2,719.2 694.2,712.9" fill="#dedede" stroke="#707070" stroke-width="0.9"/><polygon points="743.2,710.5 744.6,725.2 737.5,729.1 721.9,727.2 720.0,715.0 728.8,705.0" fill="#f2f2f2" stroke="#707070" stroke-width="0.9"/><polygon points="736.2,714.5 732.4,705.0 735.8,700.1 744.6,703.8 745.3,713.2" fill="#e6e6e6" stroke="#707070" stroke-width="0.9"/><polygon points="777.0,687.2 774.6,694.4 765.9,700.4 758.7,697.1 759.5,686.1 769.1,680.7" fill="#d6d6d8" stroke="#707070" stroke-width="0.9"/><polygon points="764.7,694.5 767.8,702.9 762.2,706.6 755.7,703.7 756.9,696.0" fill="#f2f2f2" stroke="#707070" stroke-width="0.9"/><polygon points="773.6,707.4 771.1,710.1 766.4,710.5 763.5,704.3 765.2,700.7 769.6,699.1 772.9,701.1" fill="#dedede" stroke="#707070" stroke-width="0.9"/><polygon points="781.5,702.9 786.4,698.0 791.5,699.2 794.9,702.7 793.3,709.1 786.4,711.1 782.7,710.5" fill="#d6d6d8" stroke="#707070" stroke-width="0.9"/><polygon points="795.0,705.1 803.8,708.5 804.7,715.3 799.7,721.6 791.2,721.5 787.6,717.6 788.7,708.2" fill="#d6d6d8" stroke="#707070" stroke-width="0.9"/><polygon points="818.9,716.3 821.4,719.0 816.5,725.6 812.1,723.9 808.6,719.6 813.5,713.6" fill="#d6d6d8" stroke="#707070" stroke-width="0.9"/><polygon points="825.0,709.9 829.9,714.8 828.5,720.1 822.2,721.3 819.1,718.4 819.9,712.8" fill="#ececec" stroke="#707070" stroke-width="0.9"/><polygon points="826.3,682.6 836.6,680.1 839.9,692.0 834.4,698.0 823.4,691.5" fill="#dedede" stroke="#707070" stroke-width="0.9"/><polygon points="851.9,691.3 844.5,699.6 837.2,694.4 838.2,687.8 848.9,684.9" fill="#f2f2f2" stroke="#707070" stroke-width="0.9"/><polygon points="860.2,686.0 854.2,691.5 845.5,688.1 847.8,681.4 855.3,678.5" fill="#d6d6d8" stroke="#707070" stroke-width="0.9"/><polygon points="847.1,703.5 844.4,708.4 838.0,709.7 834.8,704.5 836.9,698.5 842.8,698.2" fill="#ececec" stroke="#707070" stroke-width="0.9"/><polygon points="854.3,705.7 855.3,711.7 847.6,716.7 843.5,716.2 841.1,707.9 846.1,703.8" fill="#f2f2f2" stroke="#707070" stroke-width="0.9"/><polygon points="873.1,700.4 870.4,705.6 862.1,702.0 862.2,695.2 868.4,693.2" fill="#dedede" stroke="#707070" stroke-width="0.9"/><polygon points="874.0,708.7 865.6,718.0 856.9,712.7 856.4,703.9 869.4,701.3" fill="#e6e6e6" stroke="#707070" stroke-width="0.9"/><polygon points="864.3,724.1 859.2,724.2 855.6,718.9 857.0,713.9 862.7,711.7 868.2,714.1 868.2,718.7" fill="#e6e6e6" stroke="#707070" stroke-width="0.9"/><polygon points="867.7,725.1 864.0,717.4 871.1,707.4 878.9,709.3 882.8,719.2 874.4,724.8" fill="#dedede" stroke="#707070" stroke-width="0.9"/><polygon points="878.0,715.3 884.2,708.5 895.0,709.2 895.3,721.6 885.5,725.7" fill="#dedede" stroke="#707070" stroke-width="0.9"/><polygon points="918.2,702.2 914.9,695.8 916.1,691.1 922.6,691.0 927.0,694.6 925.0,702.3" fill="#e6e6e6" stroke="#707070" stroke-width="0.9"/><polygon points="921.2,725.1 914.5,721.3 917.7,715.3 924.4,715.2 926.2,722.9" fill="#e6e6e6" stroke="#707070" stroke-width="0.9"/><polygon points="928.1,729.6 924.1,724.4 925.3,719.8 930.7,716.5 936.1,722.3 935.4,728.6" fill="#ececec" stroke="#707070" stroke-width="0.9"/><polygon points="943.9,694.1 954.5,692.0 963.5,702.9 959.6,711.0 946.4,711.0 941.1,706.0" fill="#ececec" stroke="#707070" stroke-width="0.9"/><polygon points="973.0,685.3 971.8,692.1 965.1,695.9 961.3,692.8 962.0,685.1 966.8,682.9" fill="#dedede" stroke="#707070" stroke-width="0.9"/><polygon points="991.7,694.4 983.1,700.9 975.8,697.6 973.8,688.2 977.1,682.5 988.1,684.0" fill="#d6d6d8" stroke="#707070" stroke-width="0.9"/><polygon points="966.3,699.6 973.0,697.7 975.9,701.3 973.0,707.9 968.4,708.2 964.2,704.3" fill="#f2f2f2" stroke="#707070" stroke-width="0.9"/><polygon points="976.7,708.2 976.5,699.6 981.0,695.1 989.9,697.2 990.1,705.5 986.4,708.9" fill="#d6d6d8" stroke="#707070" stroke-width="0.9"/><polygon points="991.0,695.3 995.8,693.5 1001.0,697.4 999.6,703.6 990.9,703.2" fill="#dedede" stroke="#707070" stroke-width="0.9"/><polygon points="977.2,724.2 971.8,723.5 967.0,718.2 969.7,712.4 975.8,712.7 979.3,717.3" fill="#d6d6d8" stroke="#707070" stroke-width="0.9"/><polygon points="1020.0,692.2 1024.1,696.8 1021.2,701.6 1015.9,703.2 1013.1,696.4 1015.0,691.8" fill="#e6e6e6" stroke="#707070" stroke-width="0.9"/><polygon points="1031.8,700.7 1026.1,701.8 1021.9,698.5 1022.9,692.4 1028.7,690.7 1032.8,693.2" fill="#d6d6d8" stroke="#707070" stroke-width="0.9"/><polygon points="1022.7,714.0 1019.1,711.4 1017.7,707.0 1019.0,703.3 1023.8,701.9 1027.8,706.0 1027.1,710.8" fill="#f2f2f2" stroke="#707070" stroke-width="0.9"/><polygon points="1055.2,698.0 1043.1,703.8 1033.5,695.8 1040.1,684.3 1051.3,683.9" fill="#d6d6d8" stroke="#707070" stroke-width="0.9"/><polygon points="1067.0,704.8 1063.3,720.5 1051.5,721.7 1037.2,708.0 1043.2,693.0 1057.9,692.1" fill="#ececec" stroke="#707070" stroke-width="0.9"/><polygon points="1049.5,705.6 1044.6,704.5 1042.0,701.2 1044.4,694.6 1049.3,695.1 1052.3,698.3 1052.9,702.6" fill="#f2f2f2" stroke="#707070" stroke-width="0.9"/><polygon points="1060.1,704.6 1066.5,696.6 1082.8,699.4 1087.9,711.1 1081.9,723.0 1073.8,725.7 1063.8,717.6" fill="#e6e6e6" stroke="#707070" stroke-width="0.9"/><polygon points="1084.1,692.4 1088.2,699.1 1085.0,703.0 1081.2,703.3 1076.3,699.8 1078.6,693.5" fill="#e6e6e6" stroke="#707070" stroke-width="0.9"/><polygon points="1086.4,709.6 1087.2,705.4 1093.6,703.9 1097.4,709.2 1095.0,713.6 1089.2,715.5" fill="#dedede" stroke="#707070" stroke-width="0.9"/><polygon points="1081.3,724.8 1076.0,729.2 1069.2,730.5 1063.8,722.9 1071.3,715.6 1079.2,716.1" fill="#ececec" stroke="#707070" stroke-width="0.9"/><polygon points="1084.1,715.6 1088.5,713.9 1093.4,715.0 1096.1,720.1 1091.4,726.0 1086.4,726.5 1083.4,722.7" fill="#ececec" stroke="#707070" stroke-width="0.9"/><polygon points="1114.2,690.0 1119.5,695.3 1118.9,705.1 1111.9,705.9 1104.3,703.2 1103.0,696.8 1108.2,691.1" fill="#e6e6e6" stroke="#707070" stroke-width="0.9"/><polygon points="1109.7,718.2 1101.6,715.7 1101.9,708.6 1106.1,706.0 1113.1,708.1 1113.1,714.9" fill="#dedede" stroke="#707070" stroke-width="0.9"/><polygon points="1136.5,704.0 1141.7,716.5 1126.6,722.8 1119.6,714.9 1126.1,703.9" fill="#ececec" stroke="#707070" stroke-width="0.9"/><polygon points="1143.9,695.5 1142.9,690.8 1149.3,686.7 1156.1,691.3 1156.9,696.7 1153.3,699.7 1147.8,701.5" fill="#dedede" stroke="#707070" stroke-width="0.9"/><polygon points="1161.7,688.6 1161.2,692.9 1155.8,694.0 1150.6,691.2 1153.8,684.1 1160.0,683.9" fill="#e6e6e6" stroke="#707070" stroke-width="0.9"/><polygon points="1176.1,698.2 1171.8,703.3 1162.2,698.7 1161.8,691.3 1165.8,688.2 1171.9,685.9 1177.0,691.6" fill="#d6d6d8" stroke="#707070" stroke-width="0.9"/><polygon points="1170.0,717.1 1159.8,731.2 1146.3,731.6 1138.9,714.8 1151.2,704.3 1164.3,704.6" fill="#e6e6e6" stroke="#707070" stroke-width="0.9"/><polygon points="1150.6,707.8 1153.5,695.5 1162.6,695.6 1168.7,701.7 1166.8,710.7 1158.5,712.9" fill="#e6e6e6" stroke="#707070" stroke-width="0.9"/><polygon points="1191.0,705.2 1196.4,706.4 1198.9,711.6 1198.1,716.4 1190.4,718.1 1186.9,717.3 1186.5,709.5" fill="#ececec" stroke="#707070" stroke-width="0.9"/><polygon points="1198.1,699.1 1208.6,695.9 1214.3,704.5 1207.5,712.4 1196.2,710.1" fill="#ececec" stroke="#707070" stroke-width="0.9"/><polygon points="1210.4,700.7 1208.4,692.6 1217.5,684.1 1226.6,688.9 1228.1,697.3 1219.4,706.5" fill="#f2f2f2" stroke="#707070" stroke-width="0.9"/><polygon points="1213.2,711.3 1214.3,707.0 1220.9,704.7 1224.1,709.2 1222.5,715.7 1216.6,716.4" fill="#dedede" stroke="#707070" stroke-width="0.9"/><polygon points="1203.7,713.1 1210.2,710.9 1214.9,714.9 1213.8,718.9 1208.5,721.4 1203.6,719.2" fill="#f2f2f2" stroke="#707070" stroke-width="0.9"/><polygon points="1262.3,698.8 1256.2,695.9 1256.7,689.6 1261.2,685.3 1265.3,685.0 1267.6,690.6 1267.3,696.1" fill="#e6e6e6" stroke="#707070" stroke-width="0.9"/><polygon points="1281.0,682.5 1280.9,689.2 1277.3,692.2 1270.2,688.4 1270.6,682.5 1276.3,679.9" fill="#d6d6d8" stroke="#707070" stroke-width="0.9"/><polygon points="1287.9,703.9 1279.7,697.9 1282.9,684.6 1290.7,681.0 1302.8,684.3 1306.5,695.2 1296.4,704.9" fill="#f2f2f2" stroke="#707070" stroke-width="0.9"/><polygon points="1258.7,710.0 1258.0,702.5 1265.4,697.2 1271.9,705.9 1268.8,710.8" fill="#ececec" stroke="#707070" stroke-width="0.9"/><polygon points="1262.6,709.2 1268.8,712.0 1270.2,717.0 1265.9,721.0 1259.3,719.7 1257.2,714.4" fill="#f2f2f2" stroke="#707070" stroke-width="0.9"/><polygon points="1251.8,720.4 1245.9,718.4 1248.4,709.9 1254.9,711.1 1257.2,716.5" fill="#ececec" stroke="#707070" stroke-width="0.9"/><polygon points="1257.3,721.9 1256.0,725.7 1249.9,727.0 1245.6,722.0 1248.8,715.0 1253.5,714.9" fill="#d6d6d8" stroke="#707070" stroke-width="0.9"/><polygon points="1302.5,710.2 1299.2,715.0 1293.8,715.2 1289.4,712.0 1290.4,705.3 1294.0,702.7 1300.3,705.1" fill="#f2f2f2" stroke="#707070" stroke-width="0.9"/><polygon points="1280.4,720.0 1283.3,714.2 1290.1,713.7 1292.4,716.8 1289.2,724.7 1285.0,725.3" fill="#ececec" stroke="#707070" stroke-width="0.9"/><polygon points="1309.7,702.3 1315.7,701.2 1318.2,708.1 1313.4,711.0 1307.9,706.4" fill="#d6d6d8" stroke="#707070" stroke-width="0.9"/><polygon points="1307.6,710.0 1312.5,708.0 1319.2,713.0 1318.2,718.8 1312.7,720.9 1306.1,716.5" fill="#e6e6e6" stroke="#707070" stroke-width="0.9"/><defs><radialGradient id="dg" cx="0.45" cy="0.6" r="0.6"><stop offset="0" stop-color="#4d97e6"/><stop offset="0.7" stop-color="#3a7fd6"/><stop offset="1" stop-color="#2a62b8"/></radialGradient></defs><path d="M396.60,545.10 L400.21,550.49 A4.4,4.4 0 1 1 392.99,550.49 Z" fill="url(#dg)" stroke="#fff" stroke-width="1.3" stroke-linejoin="round"/><path d="M459.00,543.20 L462.61,548.59 A4.4,4.4 0 1 1 455.39,548.59 Z" fill="url(#dg)" stroke="#fff" stroke-width="1.3" stroke-linejoin="round"/><path d="M494.40,543.70 L498.01,549.09 A4.4,4.4 0 1 1 490.79,549.09 Z" fill="url(#dg)" stroke="#fff" stroke-width="1.3" stroke-linejoin="round"/><path d="M551.30,539.40 L554.91,544.79 A4.4,4.4 0 1 1 547.69,544.79 Z" fill="url(#dg)" stroke="#fff" stroke-width="1.3" stroke-linejoin="round"/><path d="M579.90,538.50 L583.51,543.89 A4.4,4.4 0 1 1 576.29,543.89 Z" fill="url(#dg)" stroke="#fff" stroke-width="1.3" stroke-linejoin="round"/><path d="M640.70,531.90 L644.31,537.29 A4.4,4.4 0 1 1 637.09,537.29 Z" fill="url(#dg)" stroke="#fff" stroke-width="1.3" stroke-linejoin="round"/><path d="M679.30,550.70 L682.91,556.09 A4.4,4.4 0 1 1 675.69,556.09 Z" fill="url(#dg)" stroke="#fff" stroke-width="1.3" stroke-linejoin="round"/><path d="M735.80,525.30 L739.41,530.69 A4.4,4.4 0 1 1 732.19,530.69 Z" fill="url(#dg)" stroke="#fff" stroke-width="1.3" stroke-linejoin="round"/><path d="M780.00,538.50 L783.61,543.89 A4.4,4.4 0 1 1 776.39,543.89 Z" fill="url(#dg)" stroke="#fff" stroke-width="1.3" stroke-linejoin="round"/><path d="M882.60,542.30 L886.21,547.69 A4.4,4.4 0 1 1 878.99,547.69 Z" fill="url(#dg)" stroke="#fff" stroke-width="1.3" stroke-linejoin="round"/><path d="M916.50,530.00 L920.11,535.39 A4.4,4.4 0 1 1 912.89,535.39 Z" fill="url(#dg)" stroke="#fff" stroke-width="1.3" stroke-linejoin="round"/><path d="M974.80,550.70 L978.41,556.09 A4.4,4.4 0 1 1 971.19,556.09 Z" fill="url(#dg)" stroke="#fff" stroke-width="1.3" stroke-linejoin="round"/><path d="M1012.20,535.70 L1015.81,541.09 A4.4,4.4 0 1 1 1008.59,541.09 Z" fill="url(#dg)" stroke="#fff" stroke-width="1.3" stroke-linejoin="round"/><path d="M1063.00,524.30 L1066.61,529.69 A4.4,4.4 0 1 1 1059.39,529.69 Z" fill="url(#dg)" stroke="#fff" stroke-width="1.3" stroke-linejoin="round"/><path d="M1100.70,536.20 L1104.31,541.59 A4.4,4.4 0 1 1 1097.09,541.59 Z" fill="url(#dg)" stroke="#fff" stroke-width="1.3" stroke-linejoin="round"/><path d="M1162.80,536.60 L1166.41,541.99 A4.4,4.4 0 1 1 1159.19,541.99 Z" fill="url(#dg)" stroke="#fff" stroke-width="1.3" stroke-linejoin="round"/><path d="M1212.30,531.90 L1215.91,537.29 A4.4,4.4 0 1 1 1208.69,537.29 Z" fill="url(#dg)" stroke="#fff" stroke-width="1.3" stroke-linejoin="round"/><path d="M1255.00,543.20 L1258.61,548.59 A4.4,4.4 0 1 1 1251.39,548.59 Z" fill="url(#dg)" stroke="#fff" stroke-width="1.3" stroke-linejoin="round"/><path d="M1304.00,524.30 L1307.61,529.69 A4.4,4.4 0 1 1 1300.39,529.69 Z" fill="url(#dg)" stroke="#fff" stroke-width="1.3" stroke-linejoin="round"/><circle cx="870.2" cy="489" r="8.8" fill="#fff" stroke="#333" stroke-width="1"/><text x="870.2" y="493.4" font-family="Liberation Sans" font-size="12.5" fill="#333" text-anchor="middle">1</text><circle cx="850.6" cy="504" r="8.8" fill="#fff" stroke="#333" stroke-width="1"/><text x="850.6" y="508.4" font-family="Liberation Sans" font-size="12.5" fill="#333" text-anchor="middle">2</text><circle cx="831.8" cy="519.8" r="8.8" fill="#fff" stroke="#333" stroke-width="1"/><text x="831.8" y="524.1999999999999" font-family="Liberation Sans" font-size="12.5" fill="#333" text-anchor="middle">3</text><circle cx="831.8" cy="541.2" r="8.8" fill="#fff" stroke="#333" stroke-width="1"/><text x="831.8" y="545.6" font-family="Liberation Sans" font-size="12.5" fill="#333" text-anchor="middle">4</text><circle cx="831.8" cy="559.8" r="8.8" fill="#fff" stroke="#333" stroke-width="1"/><text x="831.8" y="564.1999999999999" font-family="Liberation Sans" font-size="12.5" fill="#333" text-anchor="middle">5</text><circle cx="831.5" cy="621.2" r="8.8" fill="#fff" stroke="#333" stroke-width="1"/><text x="831.5" y="625.6" font-family="Liberation Sans" font-size="12.5" fill="#333" text-anchor="middle">6</text><g stroke="#8c8c8c" stroke-width="1"><line x1="342.3" y1="484.2" x2="342.3" y2="677.4"/><line x1="337.8" y1="484.2" x2="346.9" y2="484.2"/><line x1="337.8" y1="493.7" x2="346.9" y2="493.7"/><line x1="337.8" y1="512.3" x2="346.9" y2="512.3"/><line x1="337.8" y1="526.6" x2="346.9" y2="526.6"/><line x1="337.8" y1="555.0" x2="346.9" y2="555.0"/><line x1="337.8" y1="564.6" x2="346.9" y2="564.6"/><line x1="337.8" y1="677.4" x2="346.9" y2="677.4"/></g><text x="347.5" y="493.9" font-family="Liberation Sans" font-size="12.5" fill="#8c8c8c">10</text><text x="347.5" y="508.7" font-family="Liberation Sans" font-size="12.5" fill="#8c8c8c">20</text><text x="347.5" y="524.6" font-family="Liberation Sans" font-size="12.5" fill="#8c8c8c">15</text><text x="347.5" y="546.3" font-family="Liberation Sans" font-size="12.5" fill="#8c8c8c">30</text><text x="347.5" y="564.5" font-family="Liberation Sans" font-size="12.5" fill="#8c8c8c">10</text><text x="347.5" y="626.1" font-family="Liberation Sans" font-size="12.5" fill="#8c8c8c">120</text><text x="0" y="0" transform="translate(335.5,581.5) rotate(-90)" font-family="Liberation Sans" font-size="12.5" fill="#8c8c8c" text-anchor="middle">205</text><text x="851" y="476.5" font-family="Liberation Sans" font-size="12.5" fill="#8c8c8c" text-anchor="middle">Innen</text><text x="1322" y="476.5" font-family="Liberation Sans" font-size="12.5" fill="#c0c0c0" text-anchor="end">ubakus.de</text><g stroke="#555" stroke-width="1.1" fill="none"><path d="M1316.4,488.8 H1354.9"/><path d="M1316.4,506.9 H1336.8 L1354.9,511.3"/><path d="M1316.4,520.8 H1336.8 L1354.9,534.25"/><path d="M1316.4,549.5 H1336.8 L1354.9,556.9"/><path d="M1316.4,559.25 H1336.8 L1354.9,580.1"/><path d="M1316.4,601.3 H1354.9"/></g><circle cx="1316.4" cy="488.8" r="1.8" fill="#444"/><circle cx="1316.4" cy="506.9" r="1.8" fill="#444"/><circle cx="1316.4" cy="520.8" r="1.8" fill="#444"/><circle cx="1316.4" cy="549.5" r="1.8" fill="#444"/><circle cx="1316.4" cy="559.25" r="1.8" fill="#444"/><circle cx="1316.4" cy="601.3" r="1.8" fill="#444"/></svg>
<div class="a dl" style="left:1359px;top:480.6px">Linoleum (10mm)</div>
<div class="a dl" style="left:1359px;top:502.8px">Zementestrich (20mm)</div>
<div class="a dl" style="left:1359px;top:525.7px">Bodenheizung (15mm)</div>
<div class="a dl" style="left:1359px;top:547.9px">Swisspor PUR premium (30mm)</div>
<div class="a dl" style="left:1359px;top:570.8px">Alufolie (beschichtet) (10mm)</div>
<div class="a dl" style="left:1359px;top:593.0px">Beton (120mm)</div>
<div class="a" style="left:811px;top:801px;font-size:12.2px;color:#7a2e2e;white-space:nowrap;line-height:15px">Gewerbliche Nutzung nur mit kostenpflichtigem Zugang. <span style="color:#5e8e46">Weitere Infos</span></div>
<div id="bot" class="a"></div>
<svg class="a" style="left:7px;top:836px" width="14" height="12"><path d="M0.5 0.5 H12.5 L6.5 10.5 Z" fill="#f2f2f2"/></svg>
<div class="a" style="left:495px;top:834px;white-space:nowrap;color:#f4f4f4;line-height:22px"><span style="font-size:19.3px">U-Wert: </span><span style="font-size:23.5px">0,309</span> <span style="font-size:13.1px">W/(m²K)</span></div>
<svg class="a" style="left:688px;top:834px" width="26" height="24" viewBox="688 834 26 24"><path d="M697.72 838.6 A3.4 3.4 0 1 1 694.6 841.72" fill="none" stroke="#b4b4b4" stroke-width="2.6" stroke-linecap="round"/><path d="M700 844.3 L707.2 851.6" stroke="#b4b4b4" stroke-width="3.1" stroke-linecap="round"/><circle cx="707" cy="851.4" r="0.6" fill="#666"/></svg>
<div class="a bar" style="left:496px;top:863px;width:216px;height:15.5px"><div class="s" style="top:11.5px;height:3px;background:linear-gradient(90deg,#6f9e4c 0%,#6f9e4c 50%,#a02828 50.5%,#a02828 100%)"></div><div class="f" style="width:67px;height:10.5px"></div></div>
<div class="a bt" style="left:495px;top:884px;font-size:12.2px">GEG 2020 Bestand U ≤ 0.5</div>
<svg class="a" style="left:647.5px;top:883px" width="15" height="14"><rect width="14.5" height="14" fill="#d0d0d0"/><path d="M3 3.5 H11.5 L7.25 11 Z" fill="#555"/></svg>
<div class="a bt" style="left:495px;top:909.5px">Beitrag zum Treibhauseffekt:</div>
<div class="a bar" style="left:496px;top:925px;width:216px"><div class="s" style="background:linear-gradient(90deg,#6f9e4c 0%,#6f9e4c 40%,#d8b43a 64%,#c0602a 78%,#a82828 90%,#a02828 100%)"></div><div class="f" style="width:215px;background:#c40000;height:6px"></div></div>
<div class="a sm" style="left:495px;top:942.5px">sehr gut</div>
<div class="a sm" style="left:657.5px;top:942.5px">mangelhaft</div>
<div class="a bt" style="left:731px;top:835px">Tauwasser: 0,0026 kg/m²</div>
<div class="a bar" style="left:732px;top:850px;width:217px"><div class="s" style="background:linear-gradient(90deg,#6f9e4c 0%,#6f9e4c 40%,#d8b43a 64%,#c0602a 78%,#a82828 90%,#a02828 100%)"></div><div class="f" style="width:2px;background:#7ecb55;height:6px"></div></div>
<div class="a bt" style="left:731px;top:872px">Holzfeuchte: +0,0 %</div>
<div class="a bar" style="left:732px;top:886.5px;width:217px"><div class="s" style="background:linear-gradient(90deg,#6f9e4c 0%,#6f9e4c 16%,#d8b43a 30%,#b8482a 44%,#a82828 52%,#a02828 100%)"></div><div class="f" style="width:2px;background:#7ecb55;height:6px"></div></div>
<div class="a bt" style="left:731px;top:909.5px">Trocknungsdauer: 28 Tage</div>
<div class="a bar" style="left:732px;top:925px;width:217px"><div class="s" style="background:linear-gradient(90deg,#6f9e4c 0%,#6f9e4c 40%,#d8b43a 64%,#c0602a 78%,#a82828 90%,#a02828 100%)"></div><div class="f" style="width:60px;background:#7ecb55;height:6px"></div></div>
<div class="a sm" style="left:731px;top:942.5px">sehr gut</div>
<div class="a sm" style="left:894px;top:942.5px">mangelhaft</div>
<div class="a bt" style="left:967.5px;top:835px">sd-Wert: 1886 m</div>
<div class="a bt" style="left:1000px;top:835px;width:184.5px;text-align:right">Dicke: 20,5 cm</div>
<div class="a bt" style="left:1000px;top:851px;width:184.5px;text-align:right">Gewicht: 383 kg/m²</div>
<div class="a bt" style="left:967.5px;top:870px">Oberfläche innen: 18,5°C (55%)</div>
<div class="a bar" style="left:968px;top:885.5px;width:217px"><div class="s" style="background:linear-gradient(90deg,#a02828 0%,#b03a2a 15%,#d8b43a 33%,#6f9e4c 45%,#6f9e4c 100%)"></div><div class="f" style="width:97px;background:#7ecb55;height:6px"></div></div>
<div class="a bt" style="left:967.5px;top:907.5px">Trocknungsreserve: 6 g//m²a</div>
<div class="a bar" style="left:968px;top:922.5px;width:217px"><div class="bl" style="height:2px;background:#6a6a6a"></div></div>
<div class="a sm" style="left:967.5px;top:940.5px">mangelhaft</div>
<div class="a sm" style="left:1100px;top:940.5px;width:84.5px;text-align:right">sehr gut</div>
<div class="a bt" style="left:1203.5px;top:835px">Temp.Ampl.Dämpfung (1/TAV): -</div>
<div class="a bar" style="left:1204px;top:850px;width:217px"><div class="bl" style="height:2px;background:#6a6a6a"></div></div>
<div class="a bt" style="left:1203.5px;top:872px">Phasenverschiebung: -</div>
<div class="a bar" style="left:1204px;top:887.5px;width:217px"><div class="bl" style="height:2px;background:#6a6a6a"></div></div>
<div class="a bt" style="left:1203.5px;top:909.5px">Speicherfähigkeit innen: 64 kJ/m²K</div>
<div class="a bar" style="left:1204px;top:925px;width:217px"><div class="s" style="background:linear-gradient(90deg,#a02828 0%,#b03a2a 15%,#d8b43a 33%,#6f9e4c 45%,#6f9e4c 100%)"></div><div class="f" style="width:138px;background:#7ecb55;height:6px"></div></div>
<div class="a sm" style="left:1203.5px;top:942.5px">mangelhaft</div>
<div class="a sm" style="left:1336px;top:942.5px;width:84.5px;text-align:right">sehr gut</div>
</body></html>
